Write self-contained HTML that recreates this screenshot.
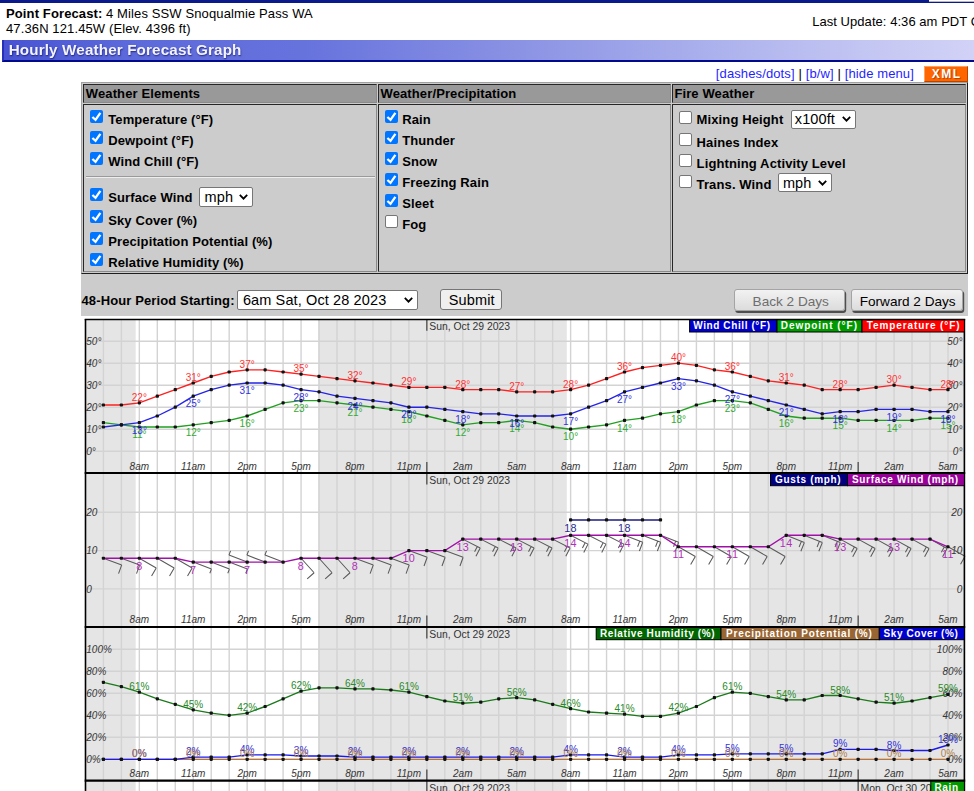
<!DOCTYPE html>
<html><head><meta charset="utf-8"><title>Hourly Weather Forecast Graph</title>
<style>
html,body{margin:0;padding:0;background:#fff;}
body{width:974px;height:791px;overflow:hidden;position:relative;font-family:"Liberation Sans",sans-serif;}
.t{position:absolute;white-space:nowrap;letter-spacing:0.12px;}
#topbar{position:absolute;left:0;top:0;width:974px;height:3px;background:#0b1a8a;}
#topbox{position:absolute;left:929px;top:0;width:45px;height:2px;background:#fff;border-bottom:1px solid #b8b8c8;box-sizing:border-box;}
#hbar{position:absolute;left:2px;top:40px;width:972px;height:22px;box-sizing:border-box;
 background:linear-gradient(to right,#4753d2 0px,#5c69da 120px,#6773dd 300px,#8890e3 500px,#aab0ec 700px,#c6c8f3 880px,#d2d2f7 972px);
 border-left:2px solid #2630b8;border-bottom:2px solid #000a8a;}
.lk{color:#1f1fff;}
#xml{position:absolute;left:924px;top:66px;width:44px;height:15.5px;box-sizing:border-box;background:#ff6600;color:#fff;font-weight:bold;font-size:12px;line-height:14px;text-align:center;letter-spacing:1.6px;text-indent:1.5px;text-shadow:1px 1px 1px rgba(110,40,0,0.6);border-top:1px solid #ffa060;border-left:1px solid #ffa060;border-bottom:1px solid #b84400;border-right:1px solid #b84400;}
#gbox{position:absolute;left:81px;top:82px;width:887px;height:234px;background:#cccccc;}
#mtab{position:absolute;left:81px;top:82px;width:887px;height:192px;box-sizing:border-box;border-top:1px solid #a0a0a0;border-left:1px solid #a0a0a0;border-right:1px solid #1e1e1e;border-bottom:1px solid #1e1e1e;}
.hc{position:absolute;top:84px;height:17px;background:#999;border-top:1px solid #262626;border-left:1px solid #262626;border-right:1px solid #8a8a8a;border-bottom:1px solid #8a8a8a;}
.bc{position:absolute;top:104px;height:166px;background:#cccccc;border-top:1px solid #262626;border-left:1px solid #262626;border-right:1px solid #8a8a8a;border-bottom:1px solid #8a8a8a;}
.cb{position:absolute;width:13px;height:13px;box-sizing:border-box;border-radius:2px;}
.cb.on{background:#0075ff;}
.cb.on svg{position:absolute;left:0;top:0;}
.cb.off{background:#fff;border:1px solid #767676;}
#hr1{position:absolute;left:86px;top:176px;width:289px;height:0;border-top:1px solid #9a9a9a;border-bottom:1px solid #eeeeee;}
.sel{position:absolute;background:#fff;border:1px solid #767676;border-radius:2px;}
.chev{position:absolute;}
#submit{position:absolute;left:440.3px;top:289.2px;width:62.2px;height:21.2px;box-sizing:border-box;background:#efefef;border:1px solid #767676;border-radius:3px;}
.ib{position:absolute;top:289.3px;height:21.4px;box-sizing:border-box;border-radius:3px;background:linear-gradient(#f2f2f2,#dcdcdc);border:1px solid #a4a4a4;box-shadow:1.2px 2px 0.6px #4e4e4e;}
#charts{position:absolute;left:0;top:0;}
#charts text{font-family:"Liberation Sans",sans-serif;}
#charts .ax{font-size:10px;font-style:italic;fill:#353535;}
#charts .dt{font-size:10.4px;fill:#333;}
#charts .dl{font-size:10px;}
#charts .dl2{font-size:10.8px;letter-spacing:0.4px;}
#charts .lg{font-size:10px;font-weight:bold;fill:#fff;}
</style></head>
<body>
<div id="topbar"></div><div id="topbox"></div>
<div class="t" style="left:6px;top:6.62px;font-size:13px;line-height:14.95px;color:#000;font-weight:bold;">Point Forecast:</div>
<div class="t" style="left:106px;top:6.62px;font-size:13px;line-height:14.95px;color:#000;">4 Miles SSW Snoqualmie Pass WA</div>
<div class="t" style="left:6px;top:21.82px;font-size:13px;line-height:14.95px;color:#000;">47.36N 121.45W (Elev. 4396 ft)</div>
<div class="t" style="left:812.2px;top:14.82px;font-size:13px;line-height:14.95px;color:#000;white-space:nowrap;letter-spacing:0.05px;">Last Update: 4:36 am PDT Oct 28, 2023</div>
<div id="hbar"></div>
<div class="t" style="left:8.7px;top:40.95px;font-size:15.25px;line-height:17.54px;color:#fff;font-weight:bold;text-shadow:0.5px 0.5px 1.5px rgba(10,10,90,0.7);white-space:nowrap;filter:blur(0.35px);color:#f4f4ff;">Hourly Weather Forecast Graph</div>
<div class="t" style="left:715.8px;top:66.52px;font-size:13px;line-height:14.95px;color:#000;white-space:nowrap;"><span class="lk">[dashes/dots]</span> | <span class="lk">[b/w]</span> | <span class="lk">[hide menu]</span></div>
<div id="xml">XML</div>
<div id="gbox"></div>
<div id="mtab"></div>
<div class="hc" style="left:83px;width:292px"></div>
<div class="bc" style="left:83px;width:292px"></div>
<div class="hc" style="left:378px;width:291px"></div>
<div class="bc" style="left:378px;width:291px"></div>
<div class="hc" style="left:672px;width:292px"></div>
<div class="bc" style="left:672px;width:292px"></div>
<div class="t" style="left:85.8px;top:86.72px;font-size:13px;line-height:14.95px;color:#000;font-weight:bold;">Weather Elements</div>
<div class="t" style="left:380.5px;top:86.72px;font-size:13px;line-height:14.95px;color:#000;font-weight:bold;">Weather/Precipitation</div>
<div class="t" style="left:674.4px;top:86.72px;font-size:13px;line-height:14.95px;color:#000;font-weight:bold;">Fire Weather</div>
<div class="cb on" style="left:90px;top:110.2px"><svg width="13" height="13" viewBox="0 0 13 13"><path d="M2.4 7 L5.5 9.8 L10.4 2.8" stroke="#fff" stroke-width="2.3" fill="none"/></svg></div>
<div class="t" style="left:108.2px;top:112.82px;font-size:13px;line-height:14.95px;color:#000;font-weight:bold;white-space:nowrap;">Temperature (°F)</div>
<div class="cb on" style="left:90px;top:131px"><svg width="13" height="13" viewBox="0 0 13 13"><path d="M2.4 7 L5.5 9.8 L10.4 2.8" stroke="#fff" stroke-width="2.3" fill="none"/></svg></div>
<div class="t" style="left:108.2px;top:133.52px;font-size:13px;line-height:14.95px;color:#000;font-weight:bold;white-space:nowrap;">Dewpoint (°F)</div>
<div class="cb on" style="left:90px;top:151.8px"><svg width="13" height="13" viewBox="0 0 13 13"><path d="M2.4 7 L5.5 9.8 L10.4 2.8" stroke="#fff" stroke-width="2.3" fill="none"/></svg></div>
<div class="t" style="left:108.2px;top:154.52px;font-size:13px;line-height:14.95px;color:#000;font-weight:bold;white-space:nowrap;">Wind Chill (°F)</div>
<div class="cb on" style="left:90px;top:188px"><svg width="13" height="13" viewBox="0 0 13 13"><path d="M2.4 7 L5.5 9.8 L10.4 2.8" stroke="#fff" stroke-width="2.3" fill="none"/></svg></div>
<div class="t" style="left:108.2px;top:190.82px;font-size:13px;line-height:14.95px;color:#000;font-weight:bold;white-space:nowrap;">Surface Wind</div>
<div class="cb on" style="left:90px;top:210px"><svg width="13" height="13" viewBox="0 0 13 13"><path d="M2.4 7 L5.5 9.8 L10.4 2.8" stroke="#fff" stroke-width="2.3" fill="none"/></svg></div>
<div class="t" style="left:108.2px;top:213.82px;font-size:13px;line-height:14.95px;color:#000;font-weight:bold;white-space:nowrap;">Sky Cover (%)</div>
<div class="cb on" style="left:90px;top:231.5px"><svg width="13" height="13" viewBox="0 0 13 13"><path d="M2.4 7 L5.5 9.8 L10.4 2.8" stroke="#fff" stroke-width="2.3" fill="none"/></svg></div>
<div class="t" style="left:108.2px;top:234.52px;font-size:13px;line-height:14.95px;color:#000;font-weight:bold;white-space:nowrap;">Precipitation Potential (%)</div>
<div class="cb on" style="left:90px;top:252.8px"><svg width="13" height="13" viewBox="0 0 13 13"><path d="M2.4 7 L5.5 9.8 L10.4 2.8" stroke="#fff" stroke-width="2.3" fill="none"/></svg></div>
<div class="t" style="left:108.2px;top:255.92px;font-size:13px;line-height:14.95px;color:#000;font-weight:bold;white-space:nowrap;">Relative Humidity (%)</div>
<div id="hr1"></div>
<div class="cb on" style="left:385px;top:110.2px"><svg width="13" height="13" viewBox="0 0 13 13"><path d="M2.4 7 L5.5 9.8 L10.4 2.8" stroke="#fff" stroke-width="2.3" fill="none"/></svg></div>
<div class="t" style="left:402.2px;top:112.92px;font-size:13px;line-height:14.95px;color:#000;font-weight:bold;white-space:nowrap;">Rain</div>
<div class="cb on" style="left:385px;top:131px"><svg width="13" height="13" viewBox="0 0 13 13"><path d="M2.4 7 L5.5 9.8 L10.4 2.8" stroke="#fff" stroke-width="2.3" fill="none"/></svg></div>
<div class="t" style="left:402.2px;top:133.72px;font-size:13px;line-height:14.95px;color:#000;font-weight:bold;white-space:nowrap;">Thunder</div>
<div class="cb on" style="left:385px;top:152px"><svg width="13" height="13" viewBox="0 0 13 13"><path d="M2.4 7 L5.5 9.8 L10.4 2.8" stroke="#fff" stroke-width="2.3" fill="none"/></svg></div>
<div class="t" style="left:402.2px;top:154.72px;font-size:13px;line-height:14.95px;color:#000;font-weight:bold;white-space:nowrap;">Snow</div>
<div class="cb on" style="left:385px;top:173.2px"><svg width="13" height="13" viewBox="0 0 13 13"><path d="M2.4 7 L5.5 9.8 L10.4 2.8" stroke="#fff" stroke-width="2.3" fill="none"/></svg></div>
<div class="t" style="left:402.2px;top:176.02px;font-size:13px;line-height:14.95px;color:#000;font-weight:bold;white-space:nowrap;">Freezing Rain</div>
<div class="cb on" style="left:385px;top:194px"><svg width="13" height="13" viewBox="0 0 13 13"><path d="M2.4 7 L5.5 9.8 L10.4 2.8" stroke="#fff" stroke-width="2.3" fill="none"/></svg></div>
<div class="t" style="left:402.2px;top:196.72px;font-size:13px;line-height:14.95px;color:#000;font-weight:bold;white-space:nowrap;">Sleet</div>
<div class="cb off" style="left:385px;top:215px"></div>
<div class="t" style="left:402.2px;top:218.22px;font-size:13px;line-height:14.95px;color:#000;font-weight:bold;white-space:nowrap;">Fog</div>
<div class="cb off" style="left:679.2px;top:110.6px"></div>
<div class="t" style="left:696.6px;top:113.02px;font-size:13px;line-height:14.95px;color:#000;font-weight:bold;white-space:nowrap;">Mixing Height</div>
<div class="cb off" style="left:679.2px;top:133.2px"></div>
<div class="t" style="left:696.6px;top:135.62px;font-size:13px;line-height:14.95px;color:#000;font-weight:bold;white-space:nowrap;">Haines Index</div>
<div class="cb off" style="left:679.2px;top:154.3px"></div>
<div class="t" style="left:696.6px;top:156.62px;font-size:13px;line-height:14.95px;color:#000;font-weight:bold;white-space:nowrap;">Lightning Activity Level</div>
<div class="cb off" style="left:679.2px;top:174.8px"></div>
<div class="t" style="left:696.6px;top:177.52px;font-size:13px;line-height:14.95px;color:#000;font-weight:bold;white-space:nowrap;">Trans. Wind</div>
<div class="sel" style="left:199.3px;top:187.2px;width:52.2px;height:17.5px"></div><div class="t" style="left:204.5px;top:188.74px;font-size:14.5px;line-height:16.67px;color:#000;white-space:nowrap;">mph</div><svg class="chev" style="left:239.3px;top:193.9px" width="9" height="6" viewBox="0 0 9 6"><path d="M0.8 0.8 L4.5 4.6 L8.2 0.8" stroke="#000" stroke-width="1.8" fill="none"/></svg>
<div class="sel" style="left:790.5px;top:109.7px;width:63.9px;height:16.9px"></div><div class="t" style="left:794.8px;top:111.04px;font-size:14.5px;line-height:16.67px;color:#000;white-space:nowrap;">x100ft</div><svg class="chev" style="left:842.2px;top:116.2px" width="9" height="6" viewBox="0 0 9 6"><path d="M0.8 0.8 L4.5 4.6 L8.2 0.8" stroke="#000" stroke-width="1.8" fill="none"/></svg>
<div class="sel" style="left:778.2px;top:173.4px;width:52.0px;height:16.9px"></div><div class="t" style="left:782.9px;top:174.84px;font-size:14.5px;line-height:16.67px;color:#000;white-space:nowrap;">mph</div><svg class="chev" style="left:818.0px;top:179.9px" width="9" height="6" viewBox="0 0 9 6"><path d="M0.8 0.8 L4.5 4.6 L8.2 0.8" stroke="#000" stroke-width="1.8" fill="none"/></svg>
<div class="t" style="left:81.5px;top:293.62px;font-size:13px;line-height:14.95px;color:#000;font-weight:bold;white-space:nowrap;">48-Hour Period Starting:</div>
<div class="sel" style="left:237.4px;top:290.2px;width:178.4px;height:17.6px"></div><div class="t" style="left:242.9px;top:291.74px;font-size:14.5px;line-height:16.67px;color:#000;white-space:nowrap;">6am Sat, Oct 28 2023</div><svg class="chev" style="left:403.6px;top:297.0px" width="9" height="6" viewBox="0 0 9 6"><path d="M0.8 0.8 L4.5 4.6 L8.2 0.8" stroke="#000" stroke-width="1.8" fill="none"/></svg>
<div id="submit"></div>
<div class="t" style="left:448.8px;top:292.24px;font-size:14.5px;line-height:16.67px;color:#000;white-space:nowrap;">Submit</div>
<div class="ib" style="left:734px;width:111px"></div>
<div class="ib" style="left:851.2px;width:112px"></div>
<div class="t" style="left:752.6px;top:293.67px;font-size:13.6px;line-height:15.64px;color:#6e6e6e;white-space:nowrap;letter-spacing:0;">Back 2 Days</div>
<div class="t" style="left:859.7px;top:293.67px;font-size:13.6px;line-height:15.64px;color:#000;white-space:nowrap;letter-spacing:0;">Forward 2 Days</div>
<svg id="charts" width="974" height="791" viewBox="0 0 974 791"><rect x="85.5" y="319.2" width="878.9" height="153.7" fill="#fff"/><rect x="85.5" y="319.2" width="50.2" height="153.7" fill="#e5e5e5"/><rect x="318.1" y="319.2" width="248.7" height="153.7" fill="#e5e5e5"/><rect x="749.2" y="319.2" width="215.2" height="153.7" fill="#e5e5e5"/><line x1="103.4" y1="319.2" x2="103.4" y2="472.9" stroke="#d3d3d3" stroke-width="1.4"/><line x1="121.37" y1="319.2" x2="121.37" y2="472.9" stroke="#d3d3d3" stroke-width="1.4"/><line x1="139.34" y1="319.2" x2="139.34" y2="472.9" stroke="#d3d3d3" stroke-width="1.4"/><line x1="157.31" y1="319.2" x2="157.31" y2="472.9" stroke="#d3d3d3" stroke-width="1.4"/><line x1="175.28" y1="319.2" x2="175.28" y2="472.9" stroke="#d3d3d3" stroke-width="1.4"/><line x1="193.25" y1="319.2" x2="193.25" y2="472.9" stroke="#d3d3d3" stroke-width="1.4"/><line x1="211.22" y1="319.2" x2="211.22" y2="472.9" stroke="#d3d3d3" stroke-width="1.4"/><line x1="229.19" y1="319.2" x2="229.19" y2="472.9" stroke="#d3d3d3" stroke-width="1.4"/><line x1="247.16" y1="319.2" x2="247.16" y2="472.9" stroke="#d3d3d3" stroke-width="1.4"/><line x1="265.13" y1="319.2" x2="265.13" y2="472.9" stroke="#d3d3d3" stroke-width="1.4"/><line x1="283.1" y1="319.2" x2="283.1" y2="472.9" stroke="#d3d3d3" stroke-width="1.4"/><line x1="301.07" y1="319.2" x2="301.07" y2="472.9" stroke="#d3d3d3" stroke-width="1.4"/><line x1="319.04" y1="319.2" x2="319.04" y2="472.9" stroke="#d3d3d3" stroke-width="1.4"/><line x1="337.01" y1="319.2" x2="337.01" y2="472.9" stroke="#d3d3d3" stroke-width="1.4"/><line x1="354.98" y1="319.2" x2="354.98" y2="472.9" stroke="#d3d3d3" stroke-width="1.4"/><line x1="372.95" y1="319.2" x2="372.95" y2="472.9" stroke="#d3d3d3" stroke-width="1.4"/><line x1="390.92" y1="319.2" x2="390.92" y2="472.9" stroke="#d3d3d3" stroke-width="1.4"/><line x1="408.89" y1="319.2" x2="408.89" y2="472.9" stroke="#d3d3d3" stroke-width="1.4"/><line x1="426.86" y1="319.2" x2="426.86" y2="472.9" stroke="#d3d3d3" stroke-width="1.4"/><line x1="444.83" y1="319.2" x2="444.83" y2="472.9" stroke="#d3d3d3" stroke-width="1.4"/><line x1="462.8" y1="319.2" x2="462.8" y2="472.9" stroke="#d3d3d3" stroke-width="1.4"/><line x1="480.77" y1="319.2" x2="480.77" y2="472.9" stroke="#d3d3d3" stroke-width="1.4"/><line x1="498.74" y1="319.2" x2="498.74" y2="472.9" stroke="#d3d3d3" stroke-width="1.4"/><line x1="516.71" y1="319.2" x2="516.71" y2="472.9" stroke="#d3d3d3" stroke-width="1.4"/><line x1="534.68" y1="319.2" x2="534.68" y2="472.9" stroke="#d3d3d3" stroke-width="1.4"/><line x1="552.65" y1="319.2" x2="552.65" y2="472.9" stroke="#d3d3d3" stroke-width="1.4"/><line x1="570.62" y1="319.2" x2="570.62" y2="472.9" stroke="#d3d3d3" stroke-width="1.4"/><line x1="588.59" y1="319.2" x2="588.59" y2="472.9" stroke="#d3d3d3" stroke-width="1.4"/><line x1="606.56" y1="319.2" x2="606.56" y2="472.9" stroke="#d3d3d3" stroke-width="1.4"/><line x1="624.53" y1="319.2" x2="624.53" y2="472.9" stroke="#d3d3d3" stroke-width="1.4"/><line x1="642.5" y1="319.2" x2="642.5" y2="472.9" stroke="#d3d3d3" stroke-width="1.4"/><line x1="660.47" y1="319.2" x2="660.47" y2="472.9" stroke="#d3d3d3" stroke-width="1.4"/><line x1="678.44" y1="319.2" x2="678.44" y2="472.9" stroke="#d3d3d3" stroke-width="1.4"/><line x1="696.41" y1="319.2" x2="696.41" y2="472.9" stroke="#d3d3d3" stroke-width="1.4"/><line x1="714.38" y1="319.2" x2="714.38" y2="472.9" stroke="#d3d3d3" stroke-width="1.4"/><line x1="732.35" y1="319.2" x2="732.35" y2="472.9" stroke="#d3d3d3" stroke-width="1.4"/><line x1="750.32" y1="319.2" x2="750.32" y2="472.9" stroke="#d3d3d3" stroke-width="1.4"/><line x1="768.29" y1="319.2" x2="768.29" y2="472.9" stroke="#d3d3d3" stroke-width="1.4"/><line x1="786.26" y1="319.2" x2="786.26" y2="472.9" stroke="#d3d3d3" stroke-width="1.4"/><line x1="804.23" y1="319.2" x2="804.23" y2="472.9" stroke="#d3d3d3" stroke-width="1.4"/><line x1="822.2" y1="319.2" x2="822.2" y2="472.9" stroke="#d3d3d3" stroke-width="1.4"/><line x1="840.17" y1="319.2" x2="840.17" y2="472.9" stroke="#d3d3d3" stroke-width="1.4"/><line x1="858.14" y1="319.2" x2="858.14" y2="472.9" stroke="#d3d3d3" stroke-width="1.4"/><line x1="876.11" y1="319.2" x2="876.11" y2="472.9" stroke="#d3d3d3" stroke-width="1.4"/><line x1="894.08" y1="319.2" x2="894.08" y2="472.9" stroke="#d3d3d3" stroke-width="1.4"/><line x1="912.05" y1="319.2" x2="912.05" y2="472.9" stroke="#d3d3d3" stroke-width="1.4"/><line x1="930.02" y1="319.2" x2="930.02" y2="472.9" stroke="#d3d3d3" stroke-width="1.4"/><line x1="947.99" y1="319.2" x2="947.99" y2="472.9" stroke="#d3d3d3" stroke-width="1.4"/><line x1="85.5" y1="451.2" x2="964.4" y2="451.2" stroke="#d3d3d3" stroke-width="1.4"/><line x1="85.5" y1="429.2" x2="964.4" y2="429.2" stroke="#d3d3d3" stroke-width="1.4"/><line x1="85.5" y1="407.2" x2="964.4" y2="407.2" stroke="#d3d3d3" stroke-width="1.4"/><line x1="85.5" y1="385.2" x2="964.4" y2="385.2" stroke="#d3d3d3" stroke-width="1.4"/><line x1="85.5" y1="363.2" x2="964.4" y2="363.2" stroke="#d3d3d3" stroke-width="1.4"/><line x1="85.5" y1="341.2" x2="964.4" y2="341.2" stroke="#d3d3d3" stroke-width="1.4"/><line x1="426.86" y1="319.2" x2="426.86" y2="330.7" stroke="#333" stroke-width="1.1"/><line x1="426.86" y1="461.9" x2="426.86" y2="472.9" stroke="#333" stroke-width="1.1"/><line x1="858.14" y1="319.2" x2="858.14" y2="330.7" stroke="#333" stroke-width="1.1"/><line x1="858.14" y1="461.9" x2="858.14" y2="472.9" stroke="#333" stroke-width="1.1"/><text x="86.3" y="454.8" class="ax">0°</text><text x="86.3" y="432.8" class="ax">10°</text><text x="86.3" y="410.8" class="ax">20°</text><text x="86.3" y="388.8" class="ax">30°</text><text x="86.3" y="366.8" class="ax">40°</text><text x="86.3" y="344.8" class="ax">50°</text><text x="962.4" y="454.8" class="ax" text-anchor="end">0°</text><text x="962.4" y="432.8" class="ax" text-anchor="end">10°</text><text x="962.4" y="410.8" class="ax" text-anchor="end">20°</text><text x="962.4" y="388.8" class="ax" text-anchor="end">30°</text><text x="962.4" y="366.8" class="ax" text-anchor="end">40°</text><text x="962.4" y="344.8" class="ax" text-anchor="end">50°</text><text x="139.34" y="469.6" class="ax" text-anchor="middle">8am</text><text x="193.25" y="469.6" class="ax" text-anchor="middle">11am</text><text x="247.16" y="469.6" class="ax" text-anchor="middle">2pm</text><text x="301.07" y="469.6" class="ax" text-anchor="middle">5pm</text><text x="354.98" y="469.6" class="ax" text-anchor="middle">8pm</text><text x="408.89" y="469.6" class="ax" text-anchor="middle">11pm</text><text x="462.8" y="469.6" class="ax" text-anchor="middle">2am</text><text x="516.71" y="469.6" class="ax" text-anchor="middle">5am</text><text x="570.62" y="469.6" class="ax" text-anchor="middle">8am</text><text x="624.53" y="469.6" class="ax" text-anchor="middle">11am</text><text x="678.44" y="469.6" class="ax" text-anchor="middle">2pm</text><text x="732.35" y="469.6" class="ax" text-anchor="middle">5pm</text><text x="786.26" y="469.6" class="ax" text-anchor="middle">8pm</text><text x="840.17" y="469.6" class="ax" text-anchor="middle">11pm</text><text x="894.08" y="469.6" class="ax" text-anchor="middle">2am</text><text x="947.99" y="469.6" class="ax" text-anchor="middle">5am</text><text x="429.26" y="330.3" class="dt">Sun, Oct 29 2023</text><text x="860.54" y="330.3" class="dt">Mon, Oct 30 2023</text><polyline points="103.4,422.6 121.37,424.8 139.34,427 157.31,427 175.28,427 193.25,424.8 211.22,422.6 229.19,420.4 247.16,416 265.13,409.4 283.1,402.8 301.07,400.6 319.04,400.6 337.01,402.8 354.98,405 372.95,407.2 390.92,409.4 408.89,411.6 426.86,416 444.83,420.4 462.8,424.8 480.77,422.6 498.74,422.6 516.71,420.4 534.68,422.6 552.65,427 570.62,429.2 588.59,427 606.56,424.8 624.53,420.4 642.5,418.2 660.47,413.8 678.44,411.6 696.41,405 714.38,400.6 732.35,400.6 750.32,402.8 768.29,409.4 786.26,416 804.23,418.2 822.2,418.2 840.17,418.2 858.14,420.4 876.11,420.4 894.08,420.4 912.05,420.4 930.02,418.2 947.99,418.2" fill="none" stroke="#22a022" stroke-width="1.35"/><polyline points="103.4,427 121.37,424.8 139.34,422.6 157.31,416 175.28,407.2 193.25,396.2 211.22,389.6 229.19,385.2 247.16,383 265.13,383 283.1,385.2 301.07,389.6 319.04,391.8 337.01,396.2 354.98,398.4 372.95,400.6 390.92,402.8 408.89,407.2 426.86,407.2 444.83,409.4 462.8,411.6 480.77,413.8 498.74,413.8 516.71,416 534.68,416 552.65,416 570.62,413.8 588.59,407.2 606.56,400.6 624.53,391.8 642.5,387.4 660.47,383 678.44,378.6 696.41,380.8 714.38,385.2 732.35,391.8 750.32,396.2 768.29,400.6 786.26,405 804.23,409.4 822.2,413.8 840.17,411.6 858.14,411.6 876.11,409.4 894.08,409.4 912.05,409.4 930.02,411.6 947.99,411.6" fill="none" stroke="#2424e8" stroke-width="1.35"/><polyline points="103.4,405 121.37,405 139.34,402.8 157.31,396.2 175.28,389.6 193.25,383 211.22,376.4 229.19,372 247.16,369.8 265.13,369.8 283.1,372 301.07,374.2 319.04,376.4 337.01,378.6 354.98,380.8 372.95,383 390.92,385.2 408.89,387.4 426.86,387.4 444.83,387.4 462.8,389.6 480.77,389.6 498.74,389.6 516.71,391.8 534.68,391.8 552.65,391.8 570.62,389.6 588.59,385.2 606.56,378.6 624.53,372 642.5,367.6 660.47,365.4 678.44,363.2 696.41,365.4 714.38,369.8 732.35,372 750.32,376.4 768.29,380.8 786.26,383 804.23,385.2 822.2,389.6 840.17,389.6 858.14,389.6 876.11,387.4 894.08,385.2 912.05,387.4 930.02,389.6 947.99,389.6" fill="none" stroke="#ff2020" stroke-width="1.35"/><rect x="101.8" y="421" width="3.2" height="3.2" rx="0.8" fill="#111"/><rect x="119.77" y="423.2" width="3.2" height="3.2" rx="0.8" fill="#111"/><rect x="137.74" y="425.4" width="3.2" height="3.2" rx="0.8" fill="#111"/><rect x="155.71" y="425.4" width="3.2" height="3.2" rx="0.8" fill="#111"/><rect x="173.68" y="425.4" width="3.2" height="3.2" rx="0.8" fill="#111"/><rect x="191.65" y="423.2" width="3.2" height="3.2" rx="0.8" fill="#111"/><rect x="209.62" y="421" width="3.2" height="3.2" rx="0.8" fill="#111"/><rect x="227.59" y="418.8" width="3.2" height="3.2" rx="0.8" fill="#111"/><rect x="245.56" y="414.4" width="3.2" height="3.2" rx="0.8" fill="#111"/><rect x="263.53" y="407.8" width="3.2" height="3.2" rx="0.8" fill="#111"/><rect x="281.5" y="401.2" width="3.2" height="3.2" rx="0.8" fill="#111"/><rect x="299.47" y="399" width="3.2" height="3.2" rx="0.8" fill="#111"/><rect x="317.44" y="399" width="3.2" height="3.2" rx="0.8" fill="#111"/><rect x="335.41" y="401.2" width="3.2" height="3.2" rx="0.8" fill="#111"/><rect x="353.38" y="403.4" width="3.2" height="3.2" rx="0.8" fill="#111"/><rect x="371.35" y="405.6" width="3.2" height="3.2" rx="0.8" fill="#111"/><rect x="389.32" y="407.8" width="3.2" height="3.2" rx="0.8" fill="#111"/><rect x="407.29" y="410" width="3.2" height="3.2" rx="0.8" fill="#111"/><rect x="425.26" y="414.4" width="3.2" height="3.2" rx="0.8" fill="#111"/><rect x="443.23" y="418.8" width="3.2" height="3.2" rx="0.8" fill="#111"/><rect x="461.2" y="423.2" width="3.2" height="3.2" rx="0.8" fill="#111"/><rect x="479.17" y="421" width="3.2" height="3.2" rx="0.8" fill="#111"/><rect x="497.14" y="421" width="3.2" height="3.2" rx="0.8" fill="#111"/><rect x="515.11" y="418.8" width="3.2" height="3.2" rx="0.8" fill="#111"/><rect x="533.08" y="421" width="3.2" height="3.2" rx="0.8" fill="#111"/><rect x="551.05" y="425.4" width="3.2" height="3.2" rx="0.8" fill="#111"/><rect x="569.02" y="427.6" width="3.2" height="3.2" rx="0.8" fill="#111"/><rect x="586.99" y="425.4" width="3.2" height="3.2" rx="0.8" fill="#111"/><rect x="604.96" y="423.2" width="3.2" height="3.2" rx="0.8" fill="#111"/><rect x="622.93" y="418.8" width="3.2" height="3.2" rx="0.8" fill="#111"/><rect x="640.9" y="416.6" width="3.2" height="3.2" rx="0.8" fill="#111"/><rect x="658.87" y="412.2" width="3.2" height="3.2" rx="0.8" fill="#111"/><rect x="676.84" y="410" width="3.2" height="3.2" rx="0.8" fill="#111"/><rect x="694.81" y="403.4" width="3.2" height="3.2" rx="0.8" fill="#111"/><rect x="712.78" y="399" width="3.2" height="3.2" rx="0.8" fill="#111"/><rect x="730.75" y="399" width="3.2" height="3.2" rx="0.8" fill="#111"/><rect x="748.72" y="401.2" width="3.2" height="3.2" rx="0.8" fill="#111"/><rect x="766.69" y="407.8" width="3.2" height="3.2" rx="0.8" fill="#111"/><rect x="784.66" y="414.4" width="3.2" height="3.2" rx="0.8" fill="#111"/><rect x="802.63" y="416.6" width="3.2" height="3.2" rx="0.8" fill="#111"/><rect x="820.6" y="416.6" width="3.2" height="3.2" rx="0.8" fill="#111"/><rect x="838.57" y="416.6" width="3.2" height="3.2" rx="0.8" fill="#111"/><rect x="856.54" y="418.8" width="3.2" height="3.2" rx="0.8" fill="#111"/><rect x="874.51" y="418.8" width="3.2" height="3.2" rx="0.8" fill="#111"/><rect x="892.48" y="418.8" width="3.2" height="3.2" rx="0.8" fill="#111"/><rect x="910.45" y="418.8" width="3.2" height="3.2" rx="0.8" fill="#111"/><rect x="928.42" y="416.6" width="3.2" height="3.2" rx="0.8" fill="#111"/><rect x="946.39" y="416.6" width="3.2" height="3.2" rx="0.8" fill="#111"/><rect x="101.8" y="425.4" width="3.2" height="3.2" rx="0.8" fill="#111"/><rect x="119.77" y="423.2" width="3.2" height="3.2" rx="0.8" fill="#111"/><rect x="137.74" y="421" width="3.2" height="3.2" rx="0.8" fill="#111"/><rect x="155.71" y="414.4" width="3.2" height="3.2" rx="0.8" fill="#111"/><rect x="173.68" y="405.6" width="3.2" height="3.2" rx="0.8" fill="#111"/><rect x="191.65" y="394.6" width="3.2" height="3.2" rx="0.8" fill="#111"/><rect x="209.62" y="388" width="3.2" height="3.2" rx="0.8" fill="#111"/><rect x="227.59" y="383.6" width="3.2" height="3.2" rx="0.8" fill="#111"/><rect x="245.56" y="381.4" width="3.2" height="3.2" rx="0.8" fill="#111"/><rect x="263.53" y="381.4" width="3.2" height="3.2" rx="0.8" fill="#111"/><rect x="281.5" y="383.6" width="3.2" height="3.2" rx="0.8" fill="#111"/><rect x="299.47" y="388" width="3.2" height="3.2" rx="0.8" fill="#111"/><rect x="317.44" y="390.2" width="3.2" height="3.2" rx="0.8" fill="#111"/><rect x="335.41" y="394.6" width="3.2" height="3.2" rx="0.8" fill="#111"/><rect x="353.38" y="396.8" width="3.2" height="3.2" rx="0.8" fill="#111"/><rect x="371.35" y="399" width="3.2" height="3.2" rx="0.8" fill="#111"/><rect x="389.32" y="401.2" width="3.2" height="3.2" rx="0.8" fill="#111"/><rect x="407.29" y="405.6" width="3.2" height="3.2" rx="0.8" fill="#111"/><rect x="425.26" y="405.6" width="3.2" height="3.2" rx="0.8" fill="#111"/><rect x="443.23" y="407.8" width="3.2" height="3.2" rx="0.8" fill="#111"/><rect x="461.2" y="410" width="3.2" height="3.2" rx="0.8" fill="#111"/><rect x="479.17" y="412.2" width="3.2" height="3.2" rx="0.8" fill="#111"/><rect x="497.14" y="412.2" width="3.2" height="3.2" rx="0.8" fill="#111"/><rect x="515.11" y="414.4" width="3.2" height="3.2" rx="0.8" fill="#111"/><rect x="533.08" y="414.4" width="3.2" height="3.2" rx="0.8" fill="#111"/><rect x="551.05" y="414.4" width="3.2" height="3.2" rx="0.8" fill="#111"/><rect x="569.02" y="412.2" width="3.2" height="3.2" rx="0.8" fill="#111"/><rect x="586.99" y="405.6" width="3.2" height="3.2" rx="0.8" fill="#111"/><rect x="604.96" y="399" width="3.2" height="3.2" rx="0.8" fill="#111"/><rect x="622.93" y="390.2" width="3.2" height="3.2" rx="0.8" fill="#111"/><rect x="640.9" y="385.8" width="3.2" height="3.2" rx="0.8" fill="#111"/><rect x="658.87" y="381.4" width="3.2" height="3.2" rx="0.8" fill="#111"/><rect x="676.84" y="377" width="3.2" height="3.2" rx="0.8" fill="#111"/><rect x="694.81" y="379.2" width="3.2" height="3.2" rx="0.8" fill="#111"/><rect x="712.78" y="383.6" width="3.2" height="3.2" rx="0.8" fill="#111"/><rect x="730.75" y="390.2" width="3.2" height="3.2" rx="0.8" fill="#111"/><rect x="748.72" y="394.6" width="3.2" height="3.2" rx="0.8" fill="#111"/><rect x="766.69" y="399" width="3.2" height="3.2" rx="0.8" fill="#111"/><rect x="784.66" y="403.4" width="3.2" height="3.2" rx="0.8" fill="#111"/><rect x="802.63" y="407.8" width="3.2" height="3.2" rx="0.8" fill="#111"/><rect x="820.6" y="412.2" width="3.2" height="3.2" rx="0.8" fill="#111"/><rect x="838.57" y="410" width="3.2" height="3.2" rx="0.8" fill="#111"/><rect x="856.54" y="410" width="3.2" height="3.2" rx="0.8" fill="#111"/><rect x="874.51" y="407.8" width="3.2" height="3.2" rx="0.8" fill="#111"/><rect x="892.48" y="407.8" width="3.2" height="3.2" rx="0.8" fill="#111"/><rect x="910.45" y="407.8" width="3.2" height="3.2" rx="0.8" fill="#111"/><rect x="928.42" y="410" width="3.2" height="3.2" rx="0.8" fill="#111"/><rect x="946.39" y="410" width="3.2" height="3.2" rx="0.8" fill="#111"/><rect x="101.8" y="403.4" width="3.2" height="3.2" rx="0.8" fill="#111"/><rect x="119.77" y="403.4" width="3.2" height="3.2" rx="0.8" fill="#111"/><rect x="137.74" y="401.2" width="3.2" height="3.2" rx="0.8" fill="#111"/><rect x="155.71" y="394.6" width="3.2" height="3.2" rx="0.8" fill="#111"/><rect x="173.68" y="388" width="3.2" height="3.2" rx="0.8" fill="#111"/><rect x="191.65" y="381.4" width="3.2" height="3.2" rx="0.8" fill="#111"/><rect x="209.62" y="374.8" width="3.2" height="3.2" rx="0.8" fill="#111"/><rect x="227.59" y="370.4" width="3.2" height="3.2" rx="0.8" fill="#111"/><rect x="245.56" y="368.2" width="3.2" height="3.2" rx="0.8" fill="#111"/><rect x="263.53" y="368.2" width="3.2" height="3.2" rx="0.8" fill="#111"/><rect x="281.5" y="370.4" width="3.2" height="3.2" rx="0.8" fill="#111"/><rect x="299.47" y="372.6" width="3.2" height="3.2" rx="0.8" fill="#111"/><rect x="317.44" y="374.8" width="3.2" height="3.2" rx="0.8" fill="#111"/><rect x="335.41" y="377" width="3.2" height="3.2" rx="0.8" fill="#111"/><rect x="353.38" y="379.2" width="3.2" height="3.2" rx="0.8" fill="#111"/><rect x="371.35" y="381.4" width="3.2" height="3.2" rx="0.8" fill="#111"/><rect x="389.32" y="383.6" width="3.2" height="3.2" rx="0.8" fill="#111"/><rect x="407.29" y="385.8" width="3.2" height="3.2" rx="0.8" fill="#111"/><rect x="425.26" y="385.8" width="3.2" height="3.2" rx="0.8" fill="#111"/><rect x="443.23" y="385.8" width="3.2" height="3.2" rx="0.8" fill="#111"/><rect x="461.2" y="388" width="3.2" height="3.2" rx="0.8" fill="#111"/><rect x="479.17" y="388" width="3.2" height="3.2" rx="0.8" fill="#111"/><rect x="497.14" y="388" width="3.2" height="3.2" rx="0.8" fill="#111"/><rect x="515.11" y="390.2" width="3.2" height="3.2" rx="0.8" fill="#111"/><rect x="533.08" y="390.2" width="3.2" height="3.2" rx="0.8" fill="#111"/><rect x="551.05" y="390.2" width="3.2" height="3.2" rx="0.8" fill="#111"/><rect x="569.02" y="388" width="3.2" height="3.2" rx="0.8" fill="#111"/><rect x="586.99" y="383.6" width="3.2" height="3.2" rx="0.8" fill="#111"/><rect x="604.96" y="377" width="3.2" height="3.2" rx="0.8" fill="#111"/><rect x="622.93" y="370.4" width="3.2" height="3.2" rx="0.8" fill="#111"/><rect x="640.9" y="366" width="3.2" height="3.2" rx="0.8" fill="#111"/><rect x="658.87" y="363.8" width="3.2" height="3.2" rx="0.8" fill="#111"/><rect x="676.84" y="361.6" width="3.2" height="3.2" rx="0.8" fill="#111"/><rect x="694.81" y="363.8" width="3.2" height="3.2" rx="0.8" fill="#111"/><rect x="712.78" y="368.2" width="3.2" height="3.2" rx="0.8" fill="#111"/><rect x="730.75" y="370.4" width="3.2" height="3.2" rx="0.8" fill="#111"/><rect x="748.72" y="374.8" width="3.2" height="3.2" rx="0.8" fill="#111"/><rect x="766.69" y="379.2" width="3.2" height="3.2" rx="0.8" fill="#111"/><rect x="784.66" y="381.4" width="3.2" height="3.2" rx="0.8" fill="#111"/><rect x="802.63" y="383.6" width="3.2" height="3.2" rx="0.8" fill="#111"/><rect x="820.6" y="388" width="3.2" height="3.2" rx="0.8" fill="#111"/><rect x="838.57" y="388" width="3.2" height="3.2" rx="0.8" fill="#111"/><rect x="856.54" y="388" width="3.2" height="3.2" rx="0.8" fill="#111"/><rect x="874.51" y="385.8" width="3.2" height="3.2" rx="0.8" fill="#111"/><rect x="892.48" y="383.6" width="3.2" height="3.2" rx="0.8" fill="#111"/><rect x="910.45" y="385.8" width="3.2" height="3.2" rx="0.8" fill="#111"/><rect x="928.42" y="388" width="3.2" height="3.2" rx="0.8" fill="#111"/><rect x="946.39" y="388" width="3.2" height="3.2" rx="0.8" fill="#111"/><text x="139.34" y="438.2" class="dl" fill="#33aa33" text-anchor="middle">11°</text><text x="193.25" y="436" class="dl" fill="#33aa33" text-anchor="middle">12°</text><text x="247.16" y="427.2" class="dl" fill="#33aa33" text-anchor="middle">16°</text><text x="301.07" y="411.8" class="dl" fill="#33aa33" text-anchor="middle">23°</text><text x="354.98" y="416.2" class="dl" fill="#33aa33" text-anchor="middle">21°</text><text x="408.89" y="422.8" class="dl" fill="#33aa33" text-anchor="middle">18°</text><text x="462.8" y="436" class="dl" fill="#33aa33" text-anchor="middle">12°</text><text x="516.71" y="431.6" class="dl" fill="#33aa33" text-anchor="middle">14°</text><text x="570.62" y="440.4" class="dl" fill="#33aa33" text-anchor="middle">10°</text><text x="624.53" y="431.6" class="dl" fill="#33aa33" text-anchor="middle">14°</text><text x="678.44" y="422.8" class="dl" fill="#33aa33" text-anchor="middle">18°</text><text x="732.35" y="411.8" class="dl" fill="#33aa33" text-anchor="middle">23°</text><text x="786.26" y="427.2" class="dl" fill="#33aa33" text-anchor="middle">16°</text><text x="840.17" y="429.4" class="dl" fill="#33aa33" text-anchor="middle">15°</text><text x="894.08" y="431.6" class="dl" fill="#33aa33" text-anchor="middle">14°</text><text x="947.99" y="429.4" class="dl" fill="#33aa33" text-anchor="middle">15°</text><text x="139.34" y="433.8" class="dl" fill="#3333dd" text-anchor="middle">13°</text><text x="193.25" y="407.4" class="dl" fill="#3333dd" text-anchor="middle">25°</text><text x="247.16" y="394.2" class="dl" fill="#3333dd" text-anchor="middle">31°</text><text x="301.07" y="400.8" class="dl" fill="#3333dd" text-anchor="middle">28°</text><text x="354.98" y="409.6" class="dl" fill="#3333dd" text-anchor="middle">24°</text><text x="408.89" y="418.4" class="dl" fill="#3333dd" text-anchor="middle">20°</text><text x="462.8" y="422.8" class="dl" fill="#3333dd" text-anchor="middle">18°</text><text x="516.71" y="427.2" class="dl" fill="#3333dd" text-anchor="middle">16°</text><text x="570.62" y="425" class="dl" fill="#3333dd" text-anchor="middle">17°</text><text x="624.53" y="403" class="dl" fill="#3333dd" text-anchor="middle">27°</text><text x="678.44" y="389.8" class="dl" fill="#3333dd" text-anchor="middle">33°</text><text x="732.35" y="403" class="dl" fill="#3333dd" text-anchor="middle">27°</text><text x="786.26" y="416.2" class="dl" fill="#3333dd" text-anchor="middle">21°</text><text x="840.17" y="422.8" class="dl" fill="#3333dd" text-anchor="middle">18°</text><text x="894.08" y="420.6" class="dl" fill="#3333dd" text-anchor="middle">19°</text><text x="947.99" y="422.8" class="dl" fill="#3333dd" text-anchor="middle">18°</text><text x="139.34" y="400.8" class="dl" fill="#ff3333" text-anchor="middle">22°</text><text x="193.25" y="381" class="dl" fill="#ff3333" text-anchor="middle">31°</text><text x="247.16" y="367.8" class="dl" fill="#ff3333" text-anchor="middle">37°</text><text x="301.07" y="372.2" class="dl" fill="#ff3333" text-anchor="middle">35°</text><text x="354.98" y="378.8" class="dl" fill="#ff3333" text-anchor="middle">32°</text><text x="408.89" y="385.4" class="dl" fill="#ff3333" text-anchor="middle">29°</text><text x="462.8" y="387.6" class="dl" fill="#ff3333" text-anchor="middle">28°</text><text x="516.71" y="389.8" class="dl" fill="#ff3333" text-anchor="middle">27°</text><text x="570.62" y="387.6" class="dl" fill="#ff3333" text-anchor="middle">28°</text><text x="624.53" y="370" class="dl" fill="#ff3333" text-anchor="middle">36°</text><text x="678.44" y="361.2" class="dl" fill="#ff3333" text-anchor="middle">40°</text><text x="732.35" y="370" class="dl" fill="#ff3333" text-anchor="middle">36°</text><text x="786.26" y="381" class="dl" fill="#ff3333" text-anchor="middle">31°</text><text x="840.17" y="387.6" class="dl" fill="#ff3333" text-anchor="middle">28°</text><text x="894.08" y="383.2" class="dl" fill="#ff3333" text-anchor="middle">30°</text><text x="947.99" y="387.6" class="dl" fill="#ff3333" text-anchor="middle">28°</text><rect x="85.5" y="472.9" width="878.9" height="153.7" fill="#fff"/><rect x="85.5" y="472.9" width="50.2" height="153.7" fill="#e5e5e5"/><rect x="318.1" y="472.9" width="248.7" height="153.7" fill="#e5e5e5"/><rect x="749.2" y="472.9" width="215.2" height="153.7" fill="#e5e5e5"/><line x1="103.4" y1="472.9" x2="103.4" y2="626.6" stroke="#d3d3d3" stroke-width="1.4"/><line x1="121.37" y1="472.9" x2="121.37" y2="626.6" stroke="#d3d3d3" stroke-width="1.4"/><line x1="139.34" y1="472.9" x2="139.34" y2="626.6" stroke="#d3d3d3" stroke-width="1.4"/><line x1="157.31" y1="472.9" x2="157.31" y2="626.6" stroke="#d3d3d3" stroke-width="1.4"/><line x1="175.28" y1="472.9" x2="175.28" y2="626.6" stroke="#d3d3d3" stroke-width="1.4"/><line x1="193.25" y1="472.9" x2="193.25" y2="626.6" stroke="#d3d3d3" stroke-width="1.4"/><line x1="211.22" y1="472.9" x2="211.22" y2="626.6" stroke="#d3d3d3" stroke-width="1.4"/><line x1="229.19" y1="472.9" x2="229.19" y2="626.6" stroke="#d3d3d3" stroke-width="1.4"/><line x1="247.16" y1="472.9" x2="247.16" y2="626.6" stroke="#d3d3d3" stroke-width="1.4"/><line x1="265.13" y1="472.9" x2="265.13" y2="626.6" stroke="#d3d3d3" stroke-width="1.4"/><line x1="283.1" y1="472.9" x2="283.1" y2="626.6" stroke="#d3d3d3" stroke-width="1.4"/><line x1="301.07" y1="472.9" x2="301.07" y2="626.6" stroke="#d3d3d3" stroke-width="1.4"/><line x1="319.04" y1="472.9" x2="319.04" y2="626.6" stroke="#d3d3d3" stroke-width="1.4"/><line x1="337.01" y1="472.9" x2="337.01" y2="626.6" stroke="#d3d3d3" stroke-width="1.4"/><line x1="354.98" y1="472.9" x2="354.98" y2="626.6" stroke="#d3d3d3" stroke-width="1.4"/><line x1="372.95" y1="472.9" x2="372.95" y2="626.6" stroke="#d3d3d3" stroke-width="1.4"/><line x1="390.92" y1="472.9" x2="390.92" y2="626.6" stroke="#d3d3d3" stroke-width="1.4"/><line x1="408.89" y1="472.9" x2="408.89" y2="626.6" stroke="#d3d3d3" stroke-width="1.4"/><line x1="426.86" y1="472.9" x2="426.86" y2="626.6" stroke="#d3d3d3" stroke-width="1.4"/><line x1="444.83" y1="472.9" x2="444.83" y2="626.6" stroke="#d3d3d3" stroke-width="1.4"/><line x1="462.8" y1="472.9" x2="462.8" y2="626.6" stroke="#d3d3d3" stroke-width="1.4"/><line x1="480.77" y1="472.9" x2="480.77" y2="626.6" stroke="#d3d3d3" stroke-width="1.4"/><line x1="498.74" y1="472.9" x2="498.74" y2="626.6" stroke="#d3d3d3" stroke-width="1.4"/><line x1="516.71" y1="472.9" x2="516.71" y2="626.6" stroke="#d3d3d3" stroke-width="1.4"/><line x1="534.68" y1="472.9" x2="534.68" y2="626.6" stroke="#d3d3d3" stroke-width="1.4"/><line x1="552.65" y1="472.9" x2="552.65" y2="626.6" stroke="#d3d3d3" stroke-width="1.4"/><line x1="570.62" y1="472.9" x2="570.62" y2="626.6" stroke="#d3d3d3" stroke-width="1.4"/><line x1="588.59" y1="472.9" x2="588.59" y2="626.6" stroke="#d3d3d3" stroke-width="1.4"/><line x1="606.56" y1="472.9" x2="606.56" y2="626.6" stroke="#d3d3d3" stroke-width="1.4"/><line x1="624.53" y1="472.9" x2="624.53" y2="626.6" stroke="#d3d3d3" stroke-width="1.4"/><line x1="642.5" y1="472.9" x2="642.5" y2="626.6" stroke="#d3d3d3" stroke-width="1.4"/><line x1="660.47" y1="472.9" x2="660.47" y2="626.6" stroke="#d3d3d3" stroke-width="1.4"/><line x1="678.44" y1="472.9" x2="678.44" y2="626.6" stroke="#d3d3d3" stroke-width="1.4"/><line x1="696.41" y1="472.9" x2="696.41" y2="626.6" stroke="#d3d3d3" stroke-width="1.4"/><line x1="714.38" y1="472.9" x2="714.38" y2="626.6" stroke="#d3d3d3" stroke-width="1.4"/><line x1="732.35" y1="472.9" x2="732.35" y2="626.6" stroke="#d3d3d3" stroke-width="1.4"/><line x1="750.32" y1="472.9" x2="750.32" y2="626.6" stroke="#d3d3d3" stroke-width="1.4"/><line x1="768.29" y1="472.9" x2="768.29" y2="626.6" stroke="#d3d3d3" stroke-width="1.4"/><line x1="786.26" y1="472.9" x2="786.26" y2="626.6" stroke="#d3d3d3" stroke-width="1.4"/><line x1="804.23" y1="472.9" x2="804.23" y2="626.6" stroke="#d3d3d3" stroke-width="1.4"/><line x1="822.2" y1="472.9" x2="822.2" y2="626.6" stroke="#d3d3d3" stroke-width="1.4"/><line x1="840.17" y1="472.9" x2="840.17" y2="626.6" stroke="#d3d3d3" stroke-width="1.4"/><line x1="858.14" y1="472.9" x2="858.14" y2="626.6" stroke="#d3d3d3" stroke-width="1.4"/><line x1="876.11" y1="472.9" x2="876.11" y2="626.6" stroke="#d3d3d3" stroke-width="1.4"/><line x1="894.08" y1="472.9" x2="894.08" y2="626.6" stroke="#d3d3d3" stroke-width="1.4"/><line x1="912.05" y1="472.9" x2="912.05" y2="626.6" stroke="#d3d3d3" stroke-width="1.4"/><line x1="930.02" y1="472.9" x2="930.02" y2="626.6" stroke="#d3d3d3" stroke-width="1.4"/><line x1="947.99" y1="472.9" x2="947.99" y2="626.6" stroke="#d3d3d3" stroke-width="1.4"/><line x1="85.5" y1="588.9" x2="964.4" y2="588.9" stroke="#d3d3d3" stroke-width="1.4"/><line x1="85.5" y1="550.6" x2="964.4" y2="550.6" stroke="#d3d3d3" stroke-width="1.4"/><line x1="85.5" y1="512.3" x2="964.4" y2="512.3" stroke="#d3d3d3" stroke-width="1.4"/><line x1="426.86" y1="472.9" x2="426.86" y2="484.4" stroke="#333" stroke-width="1.1"/><line x1="426.86" y1="615.6" x2="426.86" y2="626.6" stroke="#333" stroke-width="1.1"/><line x1="858.14" y1="472.9" x2="858.14" y2="484.4" stroke="#333" stroke-width="1.1"/><line x1="858.14" y1="615.6" x2="858.14" y2="626.6" stroke="#333" stroke-width="1.1"/><text x="86.3" y="592.5" class="ax">0</text><text x="86.3" y="554.2" class="ax">10</text><text x="86.3" y="515.9" class="ax">20</text><text x="962.4" y="592.5" class="ax" text-anchor="end">0</text><text x="962.4" y="554.2" class="ax" text-anchor="end">10</text><text x="962.4" y="515.9" class="ax" text-anchor="end">20</text><text x="139.34" y="623.3" class="ax" text-anchor="middle">8am</text><text x="193.25" y="623.3" class="ax" text-anchor="middle">11am</text><text x="247.16" y="623.3" class="ax" text-anchor="middle">2pm</text><text x="301.07" y="623.3" class="ax" text-anchor="middle">5pm</text><text x="354.98" y="623.3" class="ax" text-anchor="middle">8pm</text><text x="408.89" y="623.3" class="ax" text-anchor="middle">11pm</text><text x="462.8" y="623.3" class="ax" text-anchor="middle">2am</text><text x="516.71" y="623.3" class="ax" text-anchor="middle">5am</text><text x="570.62" y="623.3" class="ax" text-anchor="middle">8am</text><text x="624.53" y="623.3" class="ax" text-anchor="middle">11am</text><text x="678.44" y="623.3" class="ax" text-anchor="middle">2pm</text><text x="732.35" y="623.3" class="ax" text-anchor="middle">5pm</text><text x="786.26" y="623.3" class="ax" text-anchor="middle">8pm</text><text x="840.17" y="623.3" class="ax" text-anchor="middle">11pm</text><text x="894.08" y="623.3" class="ax" text-anchor="middle">2am</text><text x="947.99" y="623.3" class="ax" text-anchor="middle">5am</text><text x="429.26" y="484" class="dt">Sun, Oct 29 2023</text><text x="860.54" y="484" class="dt">Mon, Oct 30 2023</text><path d="M103.4,558.26L121.72,564.93M121.72,564.93L118.54,573.67" stroke="#5a5a5a" stroke-width="1.05" fill="none"/><path d="M121.37,558.26L139.69,564.93M139.69,564.93L136.51,573.67" stroke="#5a5a5a" stroke-width="1.05" fill="none"/><path d="M139.34,558.26L156.23,568.01M156.23,568.01L151.58,576.06" stroke="#5a5a5a" stroke-width="1.05" fill="none"/><path d="M157.31,558.26L174.2,568.01M174.2,568.01L169.55,576.06" stroke="#5a5a5a" stroke-width="1.05" fill="none"/><path d="M175.28,558.26L192.17,568.01M192.17,568.01L187.52,576.06" stroke="#5a5a5a" stroke-width="1.05" fill="none"/><path d="M193.25,562.09L211.45,569.08M211.45,569.08L209.84,573.28" stroke="#5a5a5a" stroke-width="1.05" fill="none"/><path d="M211.22,562.09L229.42,569.08M229.42,569.08L227.81,573.28" stroke="#5a5a5a" stroke-width="1.05" fill="none"/><path d="M229.19,562.09L247.39,569.08M247.39,569.08L245.78,573.28" stroke="#5a5a5a" stroke-width="1.05" fill="none"/><path d="M247.16,562.09L228.96,555.1M228.96,555.1L230.57,550.9" stroke="#5a5a5a" stroke-width="1.05" fill="none"/><path d="M265.13,562.09L246.93,555.1M246.93,555.1L248.54,550.9" stroke="#5a5a5a" stroke-width="1.05" fill="none"/><path d="M283.1,562.09L264.9,555.1M264.9,555.1L266.51,550.9" stroke="#5a5a5a" stroke-width="1.05" fill="none"/><path d="M301.07,558.26L314.12,572.75M314.12,572.75L307.21,578.97" stroke="#5a5a5a" stroke-width="1.05" fill="none"/><path d="M319.04,558.26L332.09,572.75M332.09,572.75L325.18,578.97" stroke="#5a5a5a" stroke-width="1.05" fill="none"/><path d="M337.01,558.26L350.06,572.75M350.06,572.75L343.15,578.97" stroke="#5a5a5a" stroke-width="1.05" fill="none"/><path d="M354.98,558.26L373.3,564.93M373.3,564.93L370.12,573.67" stroke="#5a5a5a" stroke-width="1.05" fill="none"/><path d="M372.95,558.26L391.27,564.93M391.27,564.93L388.09,573.67" stroke="#5a5a5a" stroke-width="1.05" fill="none"/><path d="M390.92,558.26L409.24,564.93M409.24,564.93L406.06,573.67" stroke="#5a5a5a" stroke-width="1.05" fill="none"/><path d="M408.89,550.6L427.21,557.27M427.21,557.27L424.03,566.01" stroke="#5a5a5a" stroke-width="1.05" fill="none"/><path d="M426.86,550.6L445.18,557.27M445.18,557.27L442,566.01" stroke="#5a5a5a" stroke-width="1.05" fill="none"/><path d="M444.83,550.6L463.15,557.27M463.15,557.27L459.97,566.01" stroke="#5a5a5a" stroke-width="1.05" fill="none"/><path d="M462.8,539.11L480.17,547.96M480.17,547.96L475.95,556.25M477.32,546.51L474.6,551.86" stroke="#5a5a5a" stroke-width="1.05" fill="none"/><path d="M480.77,539.11L498.14,547.96M498.14,547.96L493.92,556.25M495.29,546.51L492.57,551.86" stroke="#5a5a5a" stroke-width="1.05" fill="none"/><path d="M498.74,539.11L516.11,547.96M516.11,547.96L511.89,556.25M513.26,546.51L510.54,551.86" stroke="#5a5a5a" stroke-width="1.05" fill="none"/><path d="M516.71,539.11L534.08,547.96M534.08,547.96L529.86,556.25M531.23,546.51L528.51,551.86" stroke="#5a5a5a" stroke-width="1.05" fill="none"/><path d="M534.68,539.11L552.05,547.96M552.05,547.96L547.83,556.25M549.2,546.51L546.48,551.86" stroke="#5a5a5a" stroke-width="1.05" fill="none"/><path d="M552.65,539.11L570.02,547.96M570.02,547.96L565.8,556.25M567.17,546.51L564.45,551.86" stroke="#5a5a5a" stroke-width="1.05" fill="none"/><path d="M570.62,535.28L587.99,544.13M587.99,544.13L583.77,552.42M585.14,542.68L582.42,548.03" stroke="#5a5a5a" stroke-width="1.05" fill="none"/><path d="M588.59,535.28L605.96,544.13M605.96,544.13L601.74,552.42M603.11,542.68L600.39,548.03" stroke="#5a5a5a" stroke-width="1.05" fill="none"/><path d="M606.56,535.28L623.93,544.13M623.93,544.13L619.71,552.42M621.08,542.68L618.36,548.03" stroke="#5a5a5a" stroke-width="1.05" fill="none"/><path d="M624.53,535.28L642.73,542.27M642.73,542.27L639.4,550.95M639.75,541.12L637.6,546.72" stroke="#5a5a5a" stroke-width="1.05" fill="none"/><path d="M642.5,535.28L660.7,542.27M660.7,542.27L657.37,550.95M657.72,541.12L655.57,546.72" stroke="#5a5a5a" stroke-width="1.05" fill="none"/><path d="M660.47,535.28L678.67,542.27M678.67,542.27L675.34,550.95M675.69,541.12L673.54,546.72" stroke="#5a5a5a" stroke-width="1.05" fill="none"/><path d="M678.44,546.77L695.33,556.52M695.33,556.52L690.68,564.57" stroke="#5a5a5a" stroke-width="1.05" fill="none"/><path d="M696.41,546.77L713.3,556.52M713.3,556.52L708.65,564.57" stroke="#5a5a5a" stroke-width="1.05" fill="none"/><path d="M714.38,546.77L731.27,556.52M731.27,556.52L726.62,564.57" stroke="#5a5a5a" stroke-width="1.05" fill="none"/><path d="M732.35,546.77L749.24,556.52M749.24,556.52L744.59,564.57" stroke="#5a5a5a" stroke-width="1.05" fill="none"/><path d="M750.32,546.77L767.21,556.52M767.21,556.52L762.56,564.57" stroke="#5a5a5a" stroke-width="1.05" fill="none"/><path d="M768.29,546.77L785.18,556.52M785.18,556.52L780.53,564.57" stroke="#5a5a5a" stroke-width="1.05" fill="none"/><path d="M786.26,535.28L804.34,542.58M804.34,542.58L800.86,551.21M801.37,541.39L799.13,546.95" stroke="#5a5a5a" stroke-width="1.05" fill="none"/><path d="M804.23,535.28L822.31,542.58M822.31,542.58L818.83,551.21M819.34,541.39L817.1,546.95" stroke="#5a5a5a" stroke-width="1.05" fill="none"/><path d="M822.2,535.28L840.28,542.58M840.28,542.58L836.8,551.21M837.31,541.39L835.07,546.95" stroke="#5a5a5a" stroke-width="1.05" fill="none"/><path d="M840.17,539.11L857.23,548.56M857.23,548.56L852.72,556.7M854.43,547.01L851.52,552.26" stroke="#5a5a5a" stroke-width="1.05" fill="none"/><path d="M858.14,539.11L875.2,548.56M875.2,548.56L870.69,556.7M872.4,547.01L869.49,552.26" stroke="#5a5a5a" stroke-width="1.05" fill="none"/><path d="M876.11,539.11L893.17,548.56M893.17,548.56L888.66,556.7M890.37,547.01L887.46,552.26" stroke="#5a5a5a" stroke-width="1.05" fill="none"/><path d="M894.08,539.11L911.14,548.56M911.14,548.56L906.63,556.7M908.34,547.01L905.43,552.26" stroke="#5a5a5a" stroke-width="1.05" fill="none"/><path d="M912.05,539.11L929.11,548.56M929.11,548.56L924.6,556.7M926.31,547.01L923.4,552.26" stroke="#5a5a5a" stroke-width="1.05" fill="none"/><path d="M930.02,539.11L947.08,548.56M947.08,548.56L942.57,556.7M944.28,547.01L941.37,552.26" stroke="#5a5a5a" stroke-width="1.05" fill="none"/><path d="M947.99,546.77L965.05,556.22M965.05,556.22L960.54,564.36" stroke="#5a5a5a" stroke-width="1.05" fill="none"/><polyline points="103.4,558.26 121.37,558.26 139.34,558.26 157.31,558.26 175.28,558.26 193.25,562.09 211.22,562.09 229.19,562.09 247.16,562.09 265.13,562.09 283.1,562.09 301.07,558.26 319.04,558.26 337.01,558.26 354.98,558.26 372.95,558.26 390.92,558.26 408.89,550.6 426.86,550.6 444.83,550.6 462.8,539.11 480.77,539.11 498.74,539.11 516.71,539.11 534.68,539.11 552.65,539.11 570.62,535.28 588.59,535.28 606.56,535.28 624.53,535.28 642.5,535.28 660.47,535.28 678.44,546.77 696.41,546.77 714.38,546.77 732.35,546.77 750.32,546.77 768.29,546.77 786.26,535.28 804.23,535.28 822.2,535.28 840.17,539.11 858.14,539.11 876.11,539.11 894.08,539.11 912.05,539.11 930.02,539.11 947.99,546.77" fill="none" stroke="#a010a8" stroke-width="1.35"/><polyline points="570.62,519.96 588.59,519.96 606.56,519.96 624.53,519.96 642.5,519.96 660.47,519.96" fill="none" stroke="#1a1a80" stroke-width="1.35"/><rect x="101.8" y="556.66" width="3.2" height="3.2" rx="0.8" fill="#111"/><rect x="119.77" y="556.66" width="3.2" height="3.2" rx="0.8" fill="#111"/><rect x="137.74" y="556.66" width="3.2" height="3.2" rx="0.8" fill="#111"/><rect x="155.71" y="556.66" width="3.2" height="3.2" rx="0.8" fill="#111"/><rect x="173.68" y="556.66" width="3.2" height="3.2" rx="0.8" fill="#111"/><rect x="191.65" y="560.49" width="3.2" height="3.2" rx="0.8" fill="#111"/><rect x="209.62" y="560.49" width="3.2" height="3.2" rx="0.8" fill="#111"/><rect x="227.59" y="560.49" width="3.2" height="3.2" rx="0.8" fill="#111"/><rect x="245.56" y="560.49" width="3.2" height="3.2" rx="0.8" fill="#111"/><rect x="263.53" y="560.49" width="3.2" height="3.2" rx="0.8" fill="#111"/><rect x="281.5" y="560.49" width="3.2" height="3.2" rx="0.8" fill="#111"/><rect x="299.47" y="556.66" width="3.2" height="3.2" rx="0.8" fill="#111"/><rect x="317.44" y="556.66" width="3.2" height="3.2" rx="0.8" fill="#111"/><rect x="335.41" y="556.66" width="3.2" height="3.2" rx="0.8" fill="#111"/><rect x="353.38" y="556.66" width="3.2" height="3.2" rx="0.8" fill="#111"/><rect x="371.35" y="556.66" width="3.2" height="3.2" rx="0.8" fill="#111"/><rect x="389.32" y="556.66" width="3.2" height="3.2" rx="0.8" fill="#111"/><rect x="407.29" y="549" width="3.2" height="3.2" rx="0.8" fill="#111"/><rect x="425.26" y="549" width="3.2" height="3.2" rx="0.8" fill="#111"/><rect x="443.23" y="549" width="3.2" height="3.2" rx="0.8" fill="#111"/><rect x="461.2" y="537.51" width="3.2" height="3.2" rx="0.8" fill="#111"/><rect x="479.17" y="537.51" width="3.2" height="3.2" rx="0.8" fill="#111"/><rect x="497.14" y="537.51" width="3.2" height="3.2" rx="0.8" fill="#111"/><rect x="515.11" y="537.51" width="3.2" height="3.2" rx="0.8" fill="#111"/><rect x="533.08" y="537.51" width="3.2" height="3.2" rx="0.8" fill="#111"/><rect x="551.05" y="537.51" width="3.2" height="3.2" rx="0.8" fill="#111"/><rect x="569.02" y="533.68" width="3.2" height="3.2" rx="0.8" fill="#111"/><rect x="586.99" y="533.68" width="3.2" height="3.2" rx="0.8" fill="#111"/><rect x="604.96" y="533.68" width="3.2" height="3.2" rx="0.8" fill="#111"/><rect x="622.93" y="533.68" width="3.2" height="3.2" rx="0.8" fill="#111"/><rect x="640.9" y="533.68" width="3.2" height="3.2" rx="0.8" fill="#111"/><rect x="658.87" y="533.68" width="3.2" height="3.2" rx="0.8" fill="#111"/><rect x="676.84" y="545.17" width="3.2" height="3.2" rx="0.8" fill="#111"/><rect x="694.81" y="545.17" width="3.2" height="3.2" rx="0.8" fill="#111"/><rect x="712.78" y="545.17" width="3.2" height="3.2" rx="0.8" fill="#111"/><rect x="730.75" y="545.17" width="3.2" height="3.2" rx="0.8" fill="#111"/><rect x="748.72" y="545.17" width="3.2" height="3.2" rx="0.8" fill="#111"/><rect x="766.69" y="545.17" width="3.2" height="3.2" rx="0.8" fill="#111"/><rect x="784.66" y="533.68" width="3.2" height="3.2" rx="0.8" fill="#111"/><rect x="802.63" y="533.68" width="3.2" height="3.2" rx="0.8" fill="#111"/><rect x="820.6" y="533.68" width="3.2" height="3.2" rx="0.8" fill="#111"/><rect x="838.57" y="537.51" width="3.2" height="3.2" rx="0.8" fill="#111"/><rect x="856.54" y="537.51" width="3.2" height="3.2" rx="0.8" fill="#111"/><rect x="874.51" y="537.51" width="3.2" height="3.2" rx="0.8" fill="#111"/><rect x="892.48" y="537.51" width="3.2" height="3.2" rx="0.8" fill="#111"/><rect x="910.45" y="537.51" width="3.2" height="3.2" rx="0.8" fill="#111"/><rect x="928.42" y="537.51" width="3.2" height="3.2" rx="0.8" fill="#111"/><rect x="946.39" y="545.17" width="3.2" height="3.2" rx="0.8" fill="#111"/><rect x="569.02" y="518.36" width="3.2" height="3.2" rx="0.8" fill="#111"/><rect x="586.99" y="518.36" width="3.2" height="3.2" rx="0.8" fill="#111"/><rect x="604.96" y="518.36" width="3.2" height="3.2" rx="0.8" fill="#111"/><rect x="622.93" y="518.36" width="3.2" height="3.2" rx="0.8" fill="#111"/><rect x="640.9" y="518.36" width="3.2" height="3.2" rx="0.8" fill="#111"/><rect x="658.87" y="518.36" width="3.2" height="3.2" rx="0.8" fill="#111"/><text x="139.34" y="569.96" class="dl2" fill="#b030b8" text-anchor="middle">8</text><text x="193.25" y="573.79" class="dl2" fill="#b030b8" text-anchor="middle">7</text><text x="247.16" y="573.79" class="dl2" fill="#b030b8" text-anchor="middle">7</text><text x="301.07" y="569.96" class="dl2" fill="#b030b8" text-anchor="middle">8</text><text x="354.98" y="569.96" class="dl2" fill="#b030b8" text-anchor="middle">8</text><text x="408.89" y="562.3" class="dl2" fill="#b030b8" text-anchor="middle">10</text><text x="462.8" y="550.81" class="dl2" fill="#b030b8" text-anchor="middle">13</text><text x="516.71" y="550.81" class="dl2" fill="#b030b8" text-anchor="middle">13</text><text x="570.62" y="546.98" class="dl2" fill="#b030b8" text-anchor="middle">14</text><text x="624.53" y="546.98" class="dl2" fill="#b030b8" text-anchor="middle">14</text><text x="678.44" y="558.47" class="dl2" fill="#b030b8" text-anchor="middle">11</text><text x="732.35" y="558.47" class="dl2" fill="#b030b8" text-anchor="middle">11</text><text x="786.26" y="546.98" class="dl2" fill="#b030b8" text-anchor="middle">14</text><text x="840.17" y="550.81" class="dl2" fill="#b030b8" text-anchor="middle">13</text><text x="894.08" y="550.81" class="dl2" fill="#b030b8" text-anchor="middle">13</text><text x="947.99" y="558.47" class="dl2" fill="#b030b8" text-anchor="middle">11</text><text x="570.62" y="531.66" class="dl2" fill="#2a2a90" text-anchor="middle">18</text><text x="624.53" y="531.66" class="dl2" fill="#2a2a90" text-anchor="middle">18</text><rect x="85.5" y="626.9" width="878.9" height="153.7" fill="#fff"/><rect x="85.5" y="626.9" width="50.2" height="153.7" fill="#e5e5e5"/><rect x="318.1" y="626.9" width="248.7" height="153.7" fill="#e5e5e5"/><rect x="749.2" y="626.9" width="215.2" height="153.7" fill="#e5e5e5"/><line x1="103.4" y1="626.9" x2="103.4" y2="780.6" stroke="#d3d3d3" stroke-width="1.4"/><line x1="121.37" y1="626.9" x2="121.37" y2="780.6" stroke="#d3d3d3" stroke-width="1.4"/><line x1="139.34" y1="626.9" x2="139.34" y2="780.6" stroke="#d3d3d3" stroke-width="1.4"/><line x1="157.31" y1="626.9" x2="157.31" y2="780.6" stroke="#d3d3d3" stroke-width="1.4"/><line x1="175.28" y1="626.9" x2="175.28" y2="780.6" stroke="#d3d3d3" stroke-width="1.4"/><line x1="193.25" y1="626.9" x2="193.25" y2="780.6" stroke="#d3d3d3" stroke-width="1.4"/><line x1="211.22" y1="626.9" x2="211.22" y2="780.6" stroke="#d3d3d3" stroke-width="1.4"/><line x1="229.19" y1="626.9" x2="229.19" y2="780.6" stroke="#d3d3d3" stroke-width="1.4"/><line x1="247.16" y1="626.9" x2="247.16" y2="780.6" stroke="#d3d3d3" stroke-width="1.4"/><line x1="265.13" y1="626.9" x2="265.13" y2="780.6" stroke="#d3d3d3" stroke-width="1.4"/><line x1="283.1" y1="626.9" x2="283.1" y2="780.6" stroke="#d3d3d3" stroke-width="1.4"/><line x1="301.07" y1="626.9" x2="301.07" y2="780.6" stroke="#d3d3d3" stroke-width="1.4"/><line x1="319.04" y1="626.9" x2="319.04" y2="780.6" stroke="#d3d3d3" stroke-width="1.4"/><line x1="337.01" y1="626.9" x2="337.01" y2="780.6" stroke="#d3d3d3" stroke-width="1.4"/><line x1="354.98" y1="626.9" x2="354.98" y2="780.6" stroke="#d3d3d3" stroke-width="1.4"/><line x1="372.95" y1="626.9" x2="372.95" y2="780.6" stroke="#d3d3d3" stroke-width="1.4"/><line x1="390.92" y1="626.9" x2="390.92" y2="780.6" stroke="#d3d3d3" stroke-width="1.4"/><line x1="408.89" y1="626.9" x2="408.89" y2="780.6" stroke="#d3d3d3" stroke-width="1.4"/><line x1="426.86" y1="626.9" x2="426.86" y2="780.6" stroke="#d3d3d3" stroke-width="1.4"/><line x1="444.83" y1="626.9" x2="444.83" y2="780.6" stroke="#d3d3d3" stroke-width="1.4"/><line x1="462.8" y1="626.9" x2="462.8" y2="780.6" stroke="#d3d3d3" stroke-width="1.4"/><line x1="480.77" y1="626.9" x2="480.77" y2="780.6" stroke="#d3d3d3" stroke-width="1.4"/><line x1="498.74" y1="626.9" x2="498.74" y2="780.6" stroke="#d3d3d3" stroke-width="1.4"/><line x1="516.71" y1="626.9" x2="516.71" y2="780.6" stroke="#d3d3d3" stroke-width="1.4"/><line x1="534.68" y1="626.9" x2="534.68" y2="780.6" stroke="#d3d3d3" stroke-width="1.4"/><line x1="552.65" y1="626.9" x2="552.65" y2="780.6" stroke="#d3d3d3" stroke-width="1.4"/><line x1="570.62" y1="626.9" x2="570.62" y2="780.6" stroke="#d3d3d3" stroke-width="1.4"/><line x1="588.59" y1="626.9" x2="588.59" y2="780.6" stroke="#d3d3d3" stroke-width="1.4"/><line x1="606.56" y1="626.9" x2="606.56" y2="780.6" stroke="#d3d3d3" stroke-width="1.4"/><line x1="624.53" y1="626.9" x2="624.53" y2="780.6" stroke="#d3d3d3" stroke-width="1.4"/><line x1="642.5" y1="626.9" x2="642.5" y2="780.6" stroke="#d3d3d3" stroke-width="1.4"/><line x1="660.47" y1="626.9" x2="660.47" y2="780.6" stroke="#d3d3d3" stroke-width="1.4"/><line x1="678.44" y1="626.9" x2="678.44" y2="780.6" stroke="#d3d3d3" stroke-width="1.4"/><line x1="696.41" y1="626.9" x2="696.41" y2="780.6" stroke="#d3d3d3" stroke-width="1.4"/><line x1="714.38" y1="626.9" x2="714.38" y2="780.6" stroke="#d3d3d3" stroke-width="1.4"/><line x1="732.35" y1="626.9" x2="732.35" y2="780.6" stroke="#d3d3d3" stroke-width="1.4"/><line x1="750.32" y1="626.9" x2="750.32" y2="780.6" stroke="#d3d3d3" stroke-width="1.4"/><line x1="768.29" y1="626.9" x2="768.29" y2="780.6" stroke="#d3d3d3" stroke-width="1.4"/><line x1="786.26" y1="626.9" x2="786.26" y2="780.6" stroke="#d3d3d3" stroke-width="1.4"/><line x1="804.23" y1="626.9" x2="804.23" y2="780.6" stroke="#d3d3d3" stroke-width="1.4"/><line x1="822.2" y1="626.9" x2="822.2" y2="780.6" stroke="#d3d3d3" stroke-width="1.4"/><line x1="840.17" y1="626.9" x2="840.17" y2="780.6" stroke="#d3d3d3" stroke-width="1.4"/><line x1="858.14" y1="626.9" x2="858.14" y2="780.6" stroke="#d3d3d3" stroke-width="1.4"/><line x1="876.11" y1="626.9" x2="876.11" y2="780.6" stroke="#d3d3d3" stroke-width="1.4"/><line x1="894.08" y1="626.9" x2="894.08" y2="780.6" stroke="#d3d3d3" stroke-width="1.4"/><line x1="912.05" y1="626.9" x2="912.05" y2="780.6" stroke="#d3d3d3" stroke-width="1.4"/><line x1="930.02" y1="626.9" x2="930.02" y2="780.6" stroke="#d3d3d3" stroke-width="1.4"/><line x1="947.99" y1="626.9" x2="947.99" y2="780.6" stroke="#d3d3d3" stroke-width="1.4"/><line x1="85.5" y1="759.3" x2="964.4" y2="759.3" stroke="#d3d3d3" stroke-width="1.4"/><line x1="85.5" y1="737.3" x2="964.4" y2="737.3" stroke="#d3d3d3" stroke-width="1.4"/><line x1="85.5" y1="715.3" x2="964.4" y2="715.3" stroke="#d3d3d3" stroke-width="1.4"/><line x1="85.5" y1="693.3" x2="964.4" y2="693.3" stroke="#d3d3d3" stroke-width="1.4"/><line x1="85.5" y1="671.3" x2="964.4" y2="671.3" stroke="#d3d3d3" stroke-width="1.4"/><line x1="85.5" y1="649.3" x2="964.4" y2="649.3" stroke="#d3d3d3" stroke-width="1.4"/><line x1="426.86" y1="626.9" x2="426.86" y2="638.4" stroke="#333" stroke-width="1.1"/><line x1="426.86" y1="769.6" x2="426.86" y2="780.6" stroke="#333" stroke-width="1.1"/><line x1="858.14" y1="626.9" x2="858.14" y2="638.4" stroke="#333" stroke-width="1.1"/><line x1="858.14" y1="769.6" x2="858.14" y2="780.6" stroke="#333" stroke-width="1.1"/><text x="86.3" y="762.9" class="ax">0%</text><text x="86.3" y="740.9" class="ax">20%</text><text x="86.3" y="718.9" class="ax">40%</text><text x="86.3" y="696.9" class="ax">60%</text><text x="86.3" y="674.9" class="ax">80%</text><text x="86.3" y="652.9" class="ax">100%</text><text x="962.4" y="762.9" class="ax" text-anchor="end">0%</text><text x="962.4" y="740.9" class="ax" text-anchor="end">20%</text><text x="962.4" y="718.9" class="ax" text-anchor="end">40%</text><text x="962.4" y="696.9" class="ax" text-anchor="end">60%</text><text x="962.4" y="674.9" class="ax" text-anchor="end">80%</text><text x="962.4" y="652.9" class="ax" text-anchor="end">100%</text><text x="139.34" y="777.3" class="ax" text-anchor="middle">8am</text><text x="193.25" y="777.3" class="ax" text-anchor="middle">11am</text><text x="247.16" y="777.3" class="ax" text-anchor="middle">2pm</text><text x="301.07" y="777.3" class="ax" text-anchor="middle">5pm</text><text x="354.98" y="777.3" class="ax" text-anchor="middle">8pm</text><text x="408.89" y="777.3" class="ax" text-anchor="middle">11pm</text><text x="462.8" y="777.3" class="ax" text-anchor="middle">2am</text><text x="516.71" y="777.3" class="ax" text-anchor="middle">5am</text><text x="570.62" y="777.3" class="ax" text-anchor="middle">8am</text><text x="624.53" y="777.3" class="ax" text-anchor="middle">11am</text><text x="678.44" y="777.3" class="ax" text-anchor="middle">2pm</text><text x="732.35" y="777.3" class="ax" text-anchor="middle">5pm</text><text x="786.26" y="777.3" class="ax" text-anchor="middle">8pm</text><text x="840.17" y="777.3" class="ax" text-anchor="middle">11pm</text><text x="894.08" y="777.3" class="ax" text-anchor="middle">2am</text><text x="947.99" y="777.3" class="ax" text-anchor="middle">5am</text><text x="429.26" y="638" class="dt">Sun, Oct 29 2023</text><text x="860.54" y="638" class="dt">Mon, Oct 30 2023</text><polyline points="103.4,759.3 121.37,759.3 139.34,759.3 157.31,759.3 175.28,759.3 193.25,759.3 211.22,759.3 229.19,759.3 247.16,759.3 265.13,759.3 283.1,759.3 301.07,759.3 319.04,759.3 337.01,759.3 354.98,759.3 372.95,759.3 390.92,759.3 408.89,759.3 426.86,759.3 444.83,759.3 462.8,759.3 480.77,759.3 498.74,759.3 516.71,759.3 534.68,759.3 552.65,759.3 570.62,759.3 588.59,759.3 606.56,759.3 624.53,759.3 642.5,759.3 660.47,759.3 678.44,759.3 696.41,759.3 714.38,759.3 732.35,759.3 750.32,759.3 768.29,759.3 786.26,759.3 804.23,759.3 822.2,759.3 840.17,759.3 858.14,759.3 876.11,759.3 894.08,759.3 912.05,759.3 930.02,759.3 947.99,759.3" fill="none" stroke="#b8743a" stroke-width="1.35"/><polyline points="103.4,759.3 121.37,759.3 139.34,759.3 157.31,759.3 175.28,759.3 193.25,757.1 211.22,757.1 229.19,757.1 247.16,754.9 265.13,754.9 283.1,754.9 301.07,756 319.04,756 337.01,756 354.98,757.1 372.95,757.1 390.92,757.1 408.89,757.1 426.86,757.1 444.83,757.1 462.8,757.1 480.77,757.1 498.74,757.1 516.71,757.1 534.68,757.1 552.65,757.1 570.62,754.9 588.59,754.9 606.56,754.9 624.53,757.1 642.5,757.1 660.47,757.1 678.44,754.9 696.41,754.9 714.38,754.9 732.35,753.8 750.32,753.8 768.29,753.8 786.26,753.8 804.23,753.8 822.2,753.8 840.17,749.4 858.14,749.4 876.11,749.4 894.08,750.5 912.05,750.5 930.02,750.5 947.99,745" fill="none" stroke="#1a1aee" stroke-width="1.35"/><polyline points="103.4,682.3 121.37,686.7 139.34,692.2 157.31,698.8 175.28,704.3 193.25,709.8 211.22,713.1 229.19,715.3 247.16,713.1 265.13,706.5 283.1,698.8 301.07,691.1 319.04,687.8 337.01,687.8 354.98,688.9 372.95,688.9 390.92,690 408.89,692.2 426.86,696.6 444.83,701 462.8,703.2 480.77,702.1 498.74,698.8 516.71,697.7 534.68,699.9 552.65,704.3 570.62,708.7 588.59,712 606.56,713.1 624.53,714.2 642.5,716.4 660.47,716.4 678.44,713.1 696.41,706.5 714.38,697.7 732.35,692.2 750.32,693.3 768.29,696.6 786.26,699.9 804.23,699.9 822.2,695.5 840.17,695.5 858.14,698.8 876.11,702.1 894.08,703.2 912.05,701 930.02,697.7 947.99,694.4" fill="none" stroke="#1a7a1a" stroke-width="1.35"/><rect x="101.8" y="757.7" width="3.2" height="3.2" rx="0.8" fill="#111"/><rect x="119.77" y="757.7" width="3.2" height="3.2" rx="0.8" fill="#111"/><rect x="137.74" y="757.7" width="3.2" height="3.2" rx="0.8" fill="#111"/><rect x="155.71" y="757.7" width="3.2" height="3.2" rx="0.8" fill="#111"/><rect x="173.68" y="757.7" width="3.2" height="3.2" rx="0.8" fill="#111"/><rect x="191.65" y="757.7" width="3.2" height="3.2" rx="0.8" fill="#111"/><rect x="209.62" y="757.7" width="3.2" height="3.2" rx="0.8" fill="#111"/><rect x="227.59" y="757.7" width="3.2" height="3.2" rx="0.8" fill="#111"/><rect x="245.56" y="757.7" width="3.2" height="3.2" rx="0.8" fill="#111"/><rect x="263.53" y="757.7" width="3.2" height="3.2" rx="0.8" fill="#111"/><rect x="281.5" y="757.7" width="3.2" height="3.2" rx="0.8" fill="#111"/><rect x="299.47" y="757.7" width="3.2" height="3.2" rx="0.8" fill="#111"/><rect x="317.44" y="757.7" width="3.2" height="3.2" rx="0.8" fill="#111"/><rect x="335.41" y="757.7" width="3.2" height="3.2" rx="0.8" fill="#111"/><rect x="353.38" y="757.7" width="3.2" height="3.2" rx="0.8" fill="#111"/><rect x="371.35" y="757.7" width="3.2" height="3.2" rx="0.8" fill="#111"/><rect x="389.32" y="757.7" width="3.2" height="3.2" rx="0.8" fill="#111"/><rect x="407.29" y="757.7" width="3.2" height="3.2" rx="0.8" fill="#111"/><rect x="425.26" y="757.7" width="3.2" height="3.2" rx="0.8" fill="#111"/><rect x="443.23" y="757.7" width="3.2" height="3.2" rx="0.8" fill="#111"/><rect x="461.2" y="757.7" width="3.2" height="3.2" rx="0.8" fill="#111"/><rect x="479.17" y="757.7" width="3.2" height="3.2" rx="0.8" fill="#111"/><rect x="497.14" y="757.7" width="3.2" height="3.2" rx="0.8" fill="#111"/><rect x="515.11" y="757.7" width="3.2" height="3.2" rx="0.8" fill="#111"/><rect x="533.08" y="757.7" width="3.2" height="3.2" rx="0.8" fill="#111"/><rect x="551.05" y="757.7" width="3.2" height="3.2" rx="0.8" fill="#111"/><rect x="569.02" y="757.7" width="3.2" height="3.2" rx="0.8" fill="#111"/><rect x="586.99" y="757.7" width="3.2" height="3.2" rx="0.8" fill="#111"/><rect x="604.96" y="757.7" width="3.2" height="3.2" rx="0.8" fill="#111"/><rect x="622.93" y="757.7" width="3.2" height="3.2" rx="0.8" fill="#111"/><rect x="640.9" y="757.7" width="3.2" height="3.2" rx="0.8" fill="#111"/><rect x="658.87" y="757.7" width="3.2" height="3.2" rx="0.8" fill="#111"/><rect x="676.84" y="757.7" width="3.2" height="3.2" rx="0.8" fill="#111"/><rect x="694.81" y="757.7" width="3.2" height="3.2" rx="0.8" fill="#111"/><rect x="712.78" y="757.7" width="3.2" height="3.2" rx="0.8" fill="#111"/><rect x="730.75" y="757.7" width="3.2" height="3.2" rx="0.8" fill="#111"/><rect x="748.72" y="757.7" width="3.2" height="3.2" rx="0.8" fill="#111"/><rect x="766.69" y="757.7" width="3.2" height="3.2" rx="0.8" fill="#111"/><rect x="784.66" y="757.7" width="3.2" height="3.2" rx="0.8" fill="#111"/><rect x="802.63" y="757.7" width="3.2" height="3.2" rx="0.8" fill="#111"/><rect x="820.6" y="757.7" width="3.2" height="3.2" rx="0.8" fill="#111"/><rect x="838.57" y="757.7" width="3.2" height="3.2" rx="0.8" fill="#111"/><rect x="856.54" y="757.7" width="3.2" height="3.2" rx="0.8" fill="#111"/><rect x="874.51" y="757.7" width="3.2" height="3.2" rx="0.8" fill="#111"/><rect x="892.48" y="757.7" width="3.2" height="3.2" rx="0.8" fill="#111"/><rect x="910.45" y="757.7" width="3.2" height="3.2" rx="0.8" fill="#111"/><rect x="928.42" y="757.7" width="3.2" height="3.2" rx="0.8" fill="#111"/><rect x="946.39" y="757.7" width="3.2" height="3.2" rx="0.8" fill="#111"/><rect x="101.8" y="757.7" width="3.2" height="3.2" rx="0.8" fill="#111"/><rect x="119.77" y="757.7" width="3.2" height="3.2" rx="0.8" fill="#111"/><rect x="137.74" y="757.7" width="3.2" height="3.2" rx="0.8" fill="#111"/><rect x="155.71" y="757.7" width="3.2" height="3.2" rx="0.8" fill="#111"/><rect x="173.68" y="757.7" width="3.2" height="3.2" rx="0.8" fill="#111"/><rect x="191.65" y="755.5" width="3.2" height="3.2" rx="0.8" fill="#111"/><rect x="209.62" y="755.5" width="3.2" height="3.2" rx="0.8" fill="#111"/><rect x="227.59" y="755.5" width="3.2" height="3.2" rx="0.8" fill="#111"/><rect x="245.56" y="753.3" width="3.2" height="3.2" rx="0.8" fill="#111"/><rect x="263.53" y="753.3" width="3.2" height="3.2" rx="0.8" fill="#111"/><rect x="281.5" y="753.3" width="3.2" height="3.2" rx="0.8" fill="#111"/><rect x="299.47" y="754.4" width="3.2" height="3.2" rx="0.8" fill="#111"/><rect x="317.44" y="754.4" width="3.2" height="3.2" rx="0.8" fill="#111"/><rect x="335.41" y="754.4" width="3.2" height="3.2" rx="0.8" fill="#111"/><rect x="353.38" y="755.5" width="3.2" height="3.2" rx="0.8" fill="#111"/><rect x="371.35" y="755.5" width="3.2" height="3.2" rx="0.8" fill="#111"/><rect x="389.32" y="755.5" width="3.2" height="3.2" rx="0.8" fill="#111"/><rect x="407.29" y="755.5" width="3.2" height="3.2" rx="0.8" fill="#111"/><rect x="425.26" y="755.5" width="3.2" height="3.2" rx="0.8" fill="#111"/><rect x="443.23" y="755.5" width="3.2" height="3.2" rx="0.8" fill="#111"/><rect x="461.2" y="755.5" width="3.2" height="3.2" rx="0.8" fill="#111"/><rect x="479.17" y="755.5" width="3.2" height="3.2" rx="0.8" fill="#111"/><rect x="497.14" y="755.5" width="3.2" height="3.2" rx="0.8" fill="#111"/><rect x="515.11" y="755.5" width="3.2" height="3.2" rx="0.8" fill="#111"/><rect x="533.08" y="755.5" width="3.2" height="3.2" rx="0.8" fill="#111"/><rect x="551.05" y="755.5" width="3.2" height="3.2" rx="0.8" fill="#111"/><rect x="569.02" y="753.3" width="3.2" height="3.2" rx="0.8" fill="#111"/><rect x="586.99" y="753.3" width="3.2" height="3.2" rx="0.8" fill="#111"/><rect x="604.96" y="753.3" width="3.2" height="3.2" rx="0.8" fill="#111"/><rect x="622.93" y="755.5" width="3.2" height="3.2" rx="0.8" fill="#111"/><rect x="640.9" y="755.5" width="3.2" height="3.2" rx="0.8" fill="#111"/><rect x="658.87" y="755.5" width="3.2" height="3.2" rx="0.8" fill="#111"/><rect x="676.84" y="753.3" width="3.2" height="3.2" rx="0.8" fill="#111"/><rect x="694.81" y="753.3" width="3.2" height="3.2" rx="0.8" fill="#111"/><rect x="712.78" y="753.3" width="3.2" height="3.2" rx="0.8" fill="#111"/><rect x="730.75" y="752.2" width="3.2" height="3.2" rx="0.8" fill="#111"/><rect x="748.72" y="752.2" width="3.2" height="3.2" rx="0.8" fill="#111"/><rect x="766.69" y="752.2" width="3.2" height="3.2" rx="0.8" fill="#111"/><rect x="784.66" y="752.2" width="3.2" height="3.2" rx="0.8" fill="#111"/><rect x="802.63" y="752.2" width="3.2" height="3.2" rx="0.8" fill="#111"/><rect x="820.6" y="752.2" width="3.2" height="3.2" rx="0.8" fill="#111"/><rect x="838.57" y="747.8" width="3.2" height="3.2" rx="0.8" fill="#111"/><rect x="856.54" y="747.8" width="3.2" height="3.2" rx="0.8" fill="#111"/><rect x="874.51" y="747.8" width="3.2" height="3.2" rx="0.8" fill="#111"/><rect x="892.48" y="748.9" width="3.2" height="3.2" rx="0.8" fill="#111"/><rect x="910.45" y="748.9" width="3.2" height="3.2" rx="0.8" fill="#111"/><rect x="928.42" y="748.9" width="3.2" height="3.2" rx="0.8" fill="#111"/><rect x="946.39" y="743.4" width="3.2" height="3.2" rx="0.8" fill="#111"/><rect x="101.8" y="680.7" width="3.2" height="3.2" rx="0.8" fill="#111"/><rect x="119.77" y="685.1" width="3.2" height="3.2" rx="0.8" fill="#111"/><rect x="137.74" y="690.6" width="3.2" height="3.2" rx="0.8" fill="#111"/><rect x="155.71" y="697.2" width="3.2" height="3.2" rx="0.8" fill="#111"/><rect x="173.68" y="702.7" width="3.2" height="3.2" rx="0.8" fill="#111"/><rect x="191.65" y="708.2" width="3.2" height="3.2" rx="0.8" fill="#111"/><rect x="209.62" y="711.5" width="3.2" height="3.2" rx="0.8" fill="#111"/><rect x="227.59" y="713.7" width="3.2" height="3.2" rx="0.8" fill="#111"/><rect x="245.56" y="711.5" width="3.2" height="3.2" rx="0.8" fill="#111"/><rect x="263.53" y="704.9" width="3.2" height="3.2" rx="0.8" fill="#111"/><rect x="281.5" y="697.2" width="3.2" height="3.2" rx="0.8" fill="#111"/><rect x="299.47" y="689.5" width="3.2" height="3.2" rx="0.8" fill="#111"/><rect x="317.44" y="686.2" width="3.2" height="3.2" rx="0.8" fill="#111"/><rect x="335.41" y="686.2" width="3.2" height="3.2" rx="0.8" fill="#111"/><rect x="353.38" y="687.3" width="3.2" height="3.2" rx="0.8" fill="#111"/><rect x="371.35" y="687.3" width="3.2" height="3.2" rx="0.8" fill="#111"/><rect x="389.32" y="688.4" width="3.2" height="3.2" rx="0.8" fill="#111"/><rect x="407.29" y="690.6" width="3.2" height="3.2" rx="0.8" fill="#111"/><rect x="425.26" y="695" width="3.2" height="3.2" rx="0.8" fill="#111"/><rect x="443.23" y="699.4" width="3.2" height="3.2" rx="0.8" fill="#111"/><rect x="461.2" y="701.6" width="3.2" height="3.2" rx="0.8" fill="#111"/><rect x="479.17" y="700.5" width="3.2" height="3.2" rx="0.8" fill="#111"/><rect x="497.14" y="697.2" width="3.2" height="3.2" rx="0.8" fill="#111"/><rect x="515.11" y="696.1" width="3.2" height="3.2" rx="0.8" fill="#111"/><rect x="533.08" y="698.3" width="3.2" height="3.2" rx="0.8" fill="#111"/><rect x="551.05" y="702.7" width="3.2" height="3.2" rx="0.8" fill="#111"/><rect x="569.02" y="707.1" width="3.2" height="3.2" rx="0.8" fill="#111"/><rect x="586.99" y="710.4" width="3.2" height="3.2" rx="0.8" fill="#111"/><rect x="604.96" y="711.5" width="3.2" height="3.2" rx="0.8" fill="#111"/><rect x="622.93" y="712.6" width="3.2" height="3.2" rx="0.8" fill="#111"/><rect x="640.9" y="714.8" width="3.2" height="3.2" rx="0.8" fill="#111"/><rect x="658.87" y="714.8" width="3.2" height="3.2" rx="0.8" fill="#111"/><rect x="676.84" y="711.5" width="3.2" height="3.2" rx="0.8" fill="#111"/><rect x="694.81" y="704.9" width="3.2" height="3.2" rx="0.8" fill="#111"/><rect x="712.78" y="696.1" width="3.2" height="3.2" rx="0.8" fill="#111"/><rect x="730.75" y="690.6" width="3.2" height="3.2" rx="0.8" fill="#111"/><rect x="748.72" y="691.7" width="3.2" height="3.2" rx="0.8" fill="#111"/><rect x="766.69" y="695" width="3.2" height="3.2" rx="0.8" fill="#111"/><rect x="784.66" y="698.3" width="3.2" height="3.2" rx="0.8" fill="#111"/><rect x="802.63" y="698.3" width="3.2" height="3.2" rx="0.8" fill="#111"/><rect x="820.6" y="693.9" width="3.2" height="3.2" rx="0.8" fill="#111"/><rect x="838.57" y="693.9" width="3.2" height="3.2" rx="0.8" fill="#111"/><rect x="856.54" y="697.2" width="3.2" height="3.2" rx="0.8" fill="#111"/><rect x="874.51" y="700.5" width="3.2" height="3.2" rx="0.8" fill="#111"/><rect x="892.48" y="701.6" width="3.2" height="3.2" rx="0.8" fill="#111"/><rect x="910.45" y="699.4" width="3.2" height="3.2" rx="0.8" fill="#111"/><rect x="928.42" y="696.1" width="3.2" height="3.2" rx="0.8" fill="#111"/><rect x="946.39" y="692.8" width="3.2" height="3.2" rx="0.8" fill="#111"/><text x="139.34" y="757.3" class="dl" fill="#3333dd" text-anchor="middle">0%</text><text x="193.25" y="755.1" class="dl" fill="#3333dd" text-anchor="middle">2%</text><text x="247.16" y="752.9" class="dl" fill="#3333dd" text-anchor="middle">4%</text><text x="301.07" y="754" class="dl" fill="#3333dd" text-anchor="middle">3%</text><text x="354.98" y="755.1" class="dl" fill="#3333dd" text-anchor="middle">2%</text><text x="408.89" y="755.1" class="dl" fill="#3333dd" text-anchor="middle">2%</text><text x="462.8" y="755.1" class="dl" fill="#3333dd" text-anchor="middle">2%</text><text x="516.71" y="755.1" class="dl" fill="#3333dd" text-anchor="middle">2%</text><text x="570.62" y="752.9" class="dl" fill="#3333dd" text-anchor="middle">4%</text><text x="624.53" y="755.1" class="dl" fill="#3333dd" text-anchor="middle">2%</text><text x="678.44" y="752.9" class="dl" fill="#3333dd" text-anchor="middle">4%</text><text x="732.35" y="751.8" class="dl" fill="#3333dd" text-anchor="middle">5%</text><text x="786.26" y="751.8" class="dl" fill="#3333dd" text-anchor="middle">5%</text><text x="840.17" y="747.4" class="dl" fill="#3333dd" text-anchor="middle">9%</text><text x="894.08" y="748.5" class="dl" fill="#3333dd" text-anchor="middle">8%</text><text x="947.99" y="743" class="dl" fill="#3333dd" text-anchor="middle">13%</text><text x="139.34" y="757.3" class="dl" fill="#b0804a" text-anchor="middle">0%</text><text x="193.25" y="757.3" class="dl" fill="#b0804a" text-anchor="middle">0%</text><text x="247.16" y="757.3" class="dl" fill="#b0804a" text-anchor="middle">0%</text><text x="301.07" y="757.3" class="dl" fill="#b0804a" text-anchor="middle">0%</text><text x="354.98" y="757.3" class="dl" fill="#b0804a" text-anchor="middle">0%</text><text x="408.89" y="757.3" class="dl" fill="#b0804a" text-anchor="middle">0%</text><text x="462.8" y="757.3" class="dl" fill="#b0804a" text-anchor="middle">0%</text><text x="516.71" y="757.3" class="dl" fill="#b0804a" text-anchor="middle">0%</text><text x="570.62" y="757.3" class="dl" fill="#b0804a" text-anchor="middle">0%</text><text x="624.53" y="757.3" class="dl" fill="#b0804a" text-anchor="middle">0%</text><text x="678.44" y="757.3" class="dl" fill="#b0804a" text-anchor="middle">0%</text><text x="732.35" y="757.3" class="dl" fill="#b0804a" text-anchor="middle">0%</text><text x="786.26" y="757.3" class="dl" fill="#b0804a" text-anchor="middle">0%</text><text x="840.17" y="757.3" class="dl" fill="#b0804a" text-anchor="middle">0%</text><text x="894.08" y="757.3" class="dl" fill="#b0804a" text-anchor="middle">0%</text><text x="947.99" y="757.3" class="dl" fill="#b0804a" text-anchor="middle">0%</text><text x="139.34" y="690.2" class="dl" fill="#2a8a2a" text-anchor="middle">61%</text><text x="193.25" y="707.8" class="dl" fill="#2a8a2a" text-anchor="middle">45%</text><text x="247.16" y="711.1" class="dl" fill="#2a8a2a" text-anchor="middle">42%</text><text x="301.07" y="689.1" class="dl" fill="#2a8a2a" text-anchor="middle">62%</text><text x="354.98" y="686.9" class="dl" fill="#2a8a2a" text-anchor="middle">64%</text><text x="408.89" y="690.2" class="dl" fill="#2a8a2a" text-anchor="middle">61%</text><text x="462.8" y="701.2" class="dl" fill="#2a8a2a" text-anchor="middle">51%</text><text x="516.71" y="695.7" class="dl" fill="#2a8a2a" text-anchor="middle">56%</text><text x="570.62" y="706.7" class="dl" fill="#2a8a2a" text-anchor="middle">46%</text><text x="624.53" y="712.2" class="dl" fill="#2a8a2a" text-anchor="middle">41%</text><text x="678.44" y="711.1" class="dl" fill="#2a8a2a" text-anchor="middle">42%</text><text x="732.35" y="690.2" class="dl" fill="#2a8a2a" text-anchor="middle">61%</text><text x="786.26" y="697.9" class="dl" fill="#2a8a2a" text-anchor="middle">54%</text><text x="840.17" y="693.5" class="dl" fill="#2a8a2a" text-anchor="middle">58%</text><text x="894.08" y="701.2" class="dl" fill="#2a8a2a" text-anchor="middle">51%</text><text x="947.99" y="692.4" class="dl" fill="#2a8a2a" text-anchor="middle">59%</text><rect x="85.5" y="780.6" width="878.9" height="153.7" fill="#fff"/><rect x="85.5" y="780.6" width="50.2" height="153.7" fill="#e5e5e5"/><rect x="318.1" y="780.6" width="248.7" height="153.7" fill="#e5e5e5"/><rect x="749.2" y="780.6" width="215.2" height="153.7" fill="#e5e5e5"/><line x1="103.4" y1="780.6" x2="103.4" y2="934.3" stroke="#d3d3d3" stroke-width="1.4"/><line x1="121.37" y1="780.6" x2="121.37" y2="934.3" stroke="#d3d3d3" stroke-width="1.4"/><line x1="139.34" y1="780.6" x2="139.34" y2="934.3" stroke="#d3d3d3" stroke-width="1.4"/><line x1="157.31" y1="780.6" x2="157.31" y2="934.3" stroke="#d3d3d3" stroke-width="1.4"/><line x1="175.28" y1="780.6" x2="175.28" y2="934.3" stroke="#d3d3d3" stroke-width="1.4"/><line x1="193.25" y1="780.6" x2="193.25" y2="934.3" stroke="#d3d3d3" stroke-width="1.4"/><line x1="211.22" y1="780.6" x2="211.22" y2="934.3" stroke="#d3d3d3" stroke-width="1.4"/><line x1="229.19" y1="780.6" x2="229.19" y2="934.3" stroke="#d3d3d3" stroke-width="1.4"/><line x1="247.16" y1="780.6" x2="247.16" y2="934.3" stroke="#d3d3d3" stroke-width="1.4"/><line x1="265.13" y1="780.6" x2="265.13" y2="934.3" stroke="#d3d3d3" stroke-width="1.4"/><line x1="283.1" y1="780.6" x2="283.1" y2="934.3" stroke="#d3d3d3" stroke-width="1.4"/><line x1="301.07" y1="780.6" x2="301.07" y2="934.3" stroke="#d3d3d3" stroke-width="1.4"/><line x1="319.04" y1="780.6" x2="319.04" y2="934.3" stroke="#d3d3d3" stroke-width="1.4"/><line x1="337.01" y1="780.6" x2="337.01" y2="934.3" stroke="#d3d3d3" stroke-width="1.4"/><line x1="354.98" y1="780.6" x2="354.98" y2="934.3" stroke="#d3d3d3" stroke-width="1.4"/><line x1="372.95" y1="780.6" x2="372.95" y2="934.3" stroke="#d3d3d3" stroke-width="1.4"/><line x1="390.92" y1="780.6" x2="390.92" y2="934.3" stroke="#d3d3d3" stroke-width="1.4"/><line x1="408.89" y1="780.6" x2="408.89" y2="934.3" stroke="#d3d3d3" stroke-width="1.4"/><line x1="426.86" y1="780.6" x2="426.86" y2="934.3" stroke="#d3d3d3" stroke-width="1.4"/><line x1="444.83" y1="780.6" x2="444.83" y2="934.3" stroke="#d3d3d3" stroke-width="1.4"/><line x1="462.8" y1="780.6" x2="462.8" y2="934.3" stroke="#d3d3d3" stroke-width="1.4"/><line x1="480.77" y1="780.6" x2="480.77" y2="934.3" stroke="#d3d3d3" stroke-width="1.4"/><line x1="498.74" y1="780.6" x2="498.74" y2="934.3" stroke="#d3d3d3" stroke-width="1.4"/><line x1="516.71" y1="780.6" x2="516.71" y2="934.3" stroke="#d3d3d3" stroke-width="1.4"/><line x1="534.68" y1="780.6" x2="534.68" y2="934.3" stroke="#d3d3d3" stroke-width="1.4"/><line x1="552.65" y1="780.6" x2="552.65" y2="934.3" stroke="#d3d3d3" stroke-width="1.4"/><line x1="570.62" y1="780.6" x2="570.62" y2="934.3" stroke="#d3d3d3" stroke-width="1.4"/><line x1="588.59" y1="780.6" x2="588.59" y2="934.3" stroke="#d3d3d3" stroke-width="1.4"/><line x1="606.56" y1="780.6" x2="606.56" y2="934.3" stroke="#d3d3d3" stroke-width="1.4"/><line x1="624.53" y1="780.6" x2="624.53" y2="934.3" stroke="#d3d3d3" stroke-width="1.4"/><line x1="642.5" y1="780.6" x2="642.5" y2="934.3" stroke="#d3d3d3" stroke-width="1.4"/><line x1="660.47" y1="780.6" x2="660.47" y2="934.3" stroke="#d3d3d3" stroke-width="1.4"/><line x1="678.44" y1="780.6" x2="678.44" y2="934.3" stroke="#d3d3d3" stroke-width="1.4"/><line x1="696.41" y1="780.6" x2="696.41" y2="934.3" stroke="#d3d3d3" stroke-width="1.4"/><line x1="714.38" y1="780.6" x2="714.38" y2="934.3" stroke="#d3d3d3" stroke-width="1.4"/><line x1="732.35" y1="780.6" x2="732.35" y2="934.3" stroke="#d3d3d3" stroke-width="1.4"/><line x1="750.32" y1="780.6" x2="750.32" y2="934.3" stroke="#d3d3d3" stroke-width="1.4"/><line x1="768.29" y1="780.6" x2="768.29" y2="934.3" stroke="#d3d3d3" stroke-width="1.4"/><line x1="786.26" y1="780.6" x2="786.26" y2="934.3" stroke="#d3d3d3" stroke-width="1.4"/><line x1="804.23" y1="780.6" x2="804.23" y2="934.3" stroke="#d3d3d3" stroke-width="1.4"/><line x1="822.2" y1="780.6" x2="822.2" y2="934.3" stroke="#d3d3d3" stroke-width="1.4"/><line x1="840.17" y1="780.6" x2="840.17" y2="934.3" stroke="#d3d3d3" stroke-width="1.4"/><line x1="858.14" y1="780.6" x2="858.14" y2="934.3" stroke="#d3d3d3" stroke-width="1.4"/><line x1="876.11" y1="780.6" x2="876.11" y2="934.3" stroke="#d3d3d3" stroke-width="1.4"/><line x1="894.08" y1="780.6" x2="894.08" y2="934.3" stroke="#d3d3d3" stroke-width="1.4"/><line x1="912.05" y1="780.6" x2="912.05" y2="934.3" stroke="#d3d3d3" stroke-width="1.4"/><line x1="930.02" y1="780.6" x2="930.02" y2="934.3" stroke="#d3d3d3" stroke-width="1.4"/><line x1="947.99" y1="780.6" x2="947.99" y2="934.3" stroke="#d3d3d3" stroke-width="1.4"/><line x1="426.86" y1="780.6" x2="426.86" y2="792.1" stroke="#333" stroke-width="1.1"/><line x1="426.86" y1="923.3" x2="426.86" y2="934.3" stroke="#333" stroke-width="1.1"/><line x1="858.14" y1="780.6" x2="858.14" y2="792.1" stroke="#333" stroke-width="1.1"/><line x1="858.14" y1="923.3" x2="858.14" y2="934.3" stroke="#333" stroke-width="1.1"/><text x="139.34" y="931" class="ax" text-anchor="middle">8am</text><text x="193.25" y="931" class="ax" text-anchor="middle">11am</text><text x="247.16" y="931" class="ax" text-anchor="middle">2pm</text><text x="301.07" y="931" class="ax" text-anchor="middle">5pm</text><text x="354.98" y="931" class="ax" text-anchor="middle">8pm</text><text x="408.89" y="931" class="ax" text-anchor="middle">11pm</text><text x="462.8" y="931" class="ax" text-anchor="middle">2am</text><text x="516.71" y="931" class="ax" text-anchor="middle">5am</text><text x="570.62" y="931" class="ax" text-anchor="middle">8am</text><text x="624.53" y="931" class="ax" text-anchor="middle">11am</text><text x="678.44" y="931" class="ax" text-anchor="middle">2pm</text><text x="732.35" y="931" class="ax" text-anchor="middle">5pm</text><text x="786.26" y="931" class="ax" text-anchor="middle">8pm</text><text x="840.17" y="931" class="ax" text-anchor="middle">11pm</text><text x="894.08" y="931" class="ax" text-anchor="middle">2am</text><text x="947.99" y="931" class="ax" text-anchor="middle">5am</text><text x="429.26" y="791.7" class="dt">Sun, Oct 29 2023</text><text x="860.54" y="791.7" class="dt">Mon, Oct 30 2023</text><line x1="84.7" y1="319.5" x2="965.2" y2="319.5" stroke="#000" stroke-width="1.4"/><line x1="84.7" y1="473" x2="965.2" y2="473" stroke="#000" stroke-width="2.2"/><line x1="84.7" y1="627" x2="965.2" y2="627" stroke="#000" stroke-width="2.2"/><line x1="84.7" y1="780.7" x2="965.2" y2="780.7" stroke="#000" stroke-width="2.2"/><line x1="85.5" y1="319.2" x2="85.5" y2="791" stroke="#000" stroke-width="1.6"/><line x1="964.4" y1="319.2" x2="964.4" y2="791" stroke="#000" stroke-width="1.6"/><rect x="689.6" y="319.8" width="87.4" height="12.2" fill="#0000cc" stroke="#000" stroke-width="1"/><text x="693.2" y="329.4" class="lg" textLength="76.8" lengthAdjust="spacing">Wind Chill (°F)</text><rect x="777" y="319.8" width="85" height="12.2" fill="#009900" stroke="#000" stroke-width="1"/><text x="780.7" y="329.4" class="lg" textLength="76.3" lengthAdjust="spacing">Dewpoint (°F)</text><rect x="862" y="319.8" width="102.4" height="12.2" fill="#ff0000" stroke="#000" stroke-width="1"/><text x="866.7" y="329.4" class="lg" textLength="92.9" lengthAdjust="spacing">Temperature (°F)</text><rect x="770.5" y="473.5" width="77" height="12.2" fill="#000080" stroke="#000" stroke-width="1"/><text x="775" y="483.1" class="lg" textLength="65.6" lengthAdjust="spacing">Gusts (mph)</text><rect x="847.5" y="473.5" width="116.9" height="12.2" fill="#990099" stroke="#000" stroke-width="1"/><text x="851.9" y="483.1" class="lg" textLength="106.3" lengthAdjust="spacing">Surface Wind (mph)</text><rect x="596.2" y="627.5" width="124.8" height="12.2" fill="#006600" stroke="#000" stroke-width="1"/><text x="599.9" y="637.1" class="lg" textLength="114.7" lengthAdjust="spacing">Relative Humidity (%)</text><rect x="721" y="627.5" width="158.3" height="12.2" fill="#996633" stroke="#000" stroke-width="1"/><text x="726.1" y="637.1" class="lg" textLength="145.8" lengthAdjust="spacing">Precipitation Potential (%)</text><rect x="879.3" y="627.5" width="85.1" height="12.2" fill="#0000cc" stroke="#000" stroke-width="1"/><text x="883.5" y="637.1" class="lg" textLength="74.3" lengthAdjust="spacing">Sky Cover (%)</text><rect x="930.8" y="781.2" width="33.6" height="12.2" fill="#009900" stroke="#000" stroke-width="1"/><text x="934.5" y="790.8" class="lg" textLength="23.5" lengthAdjust="spacing">Rain</text></svg>
</body></html>
